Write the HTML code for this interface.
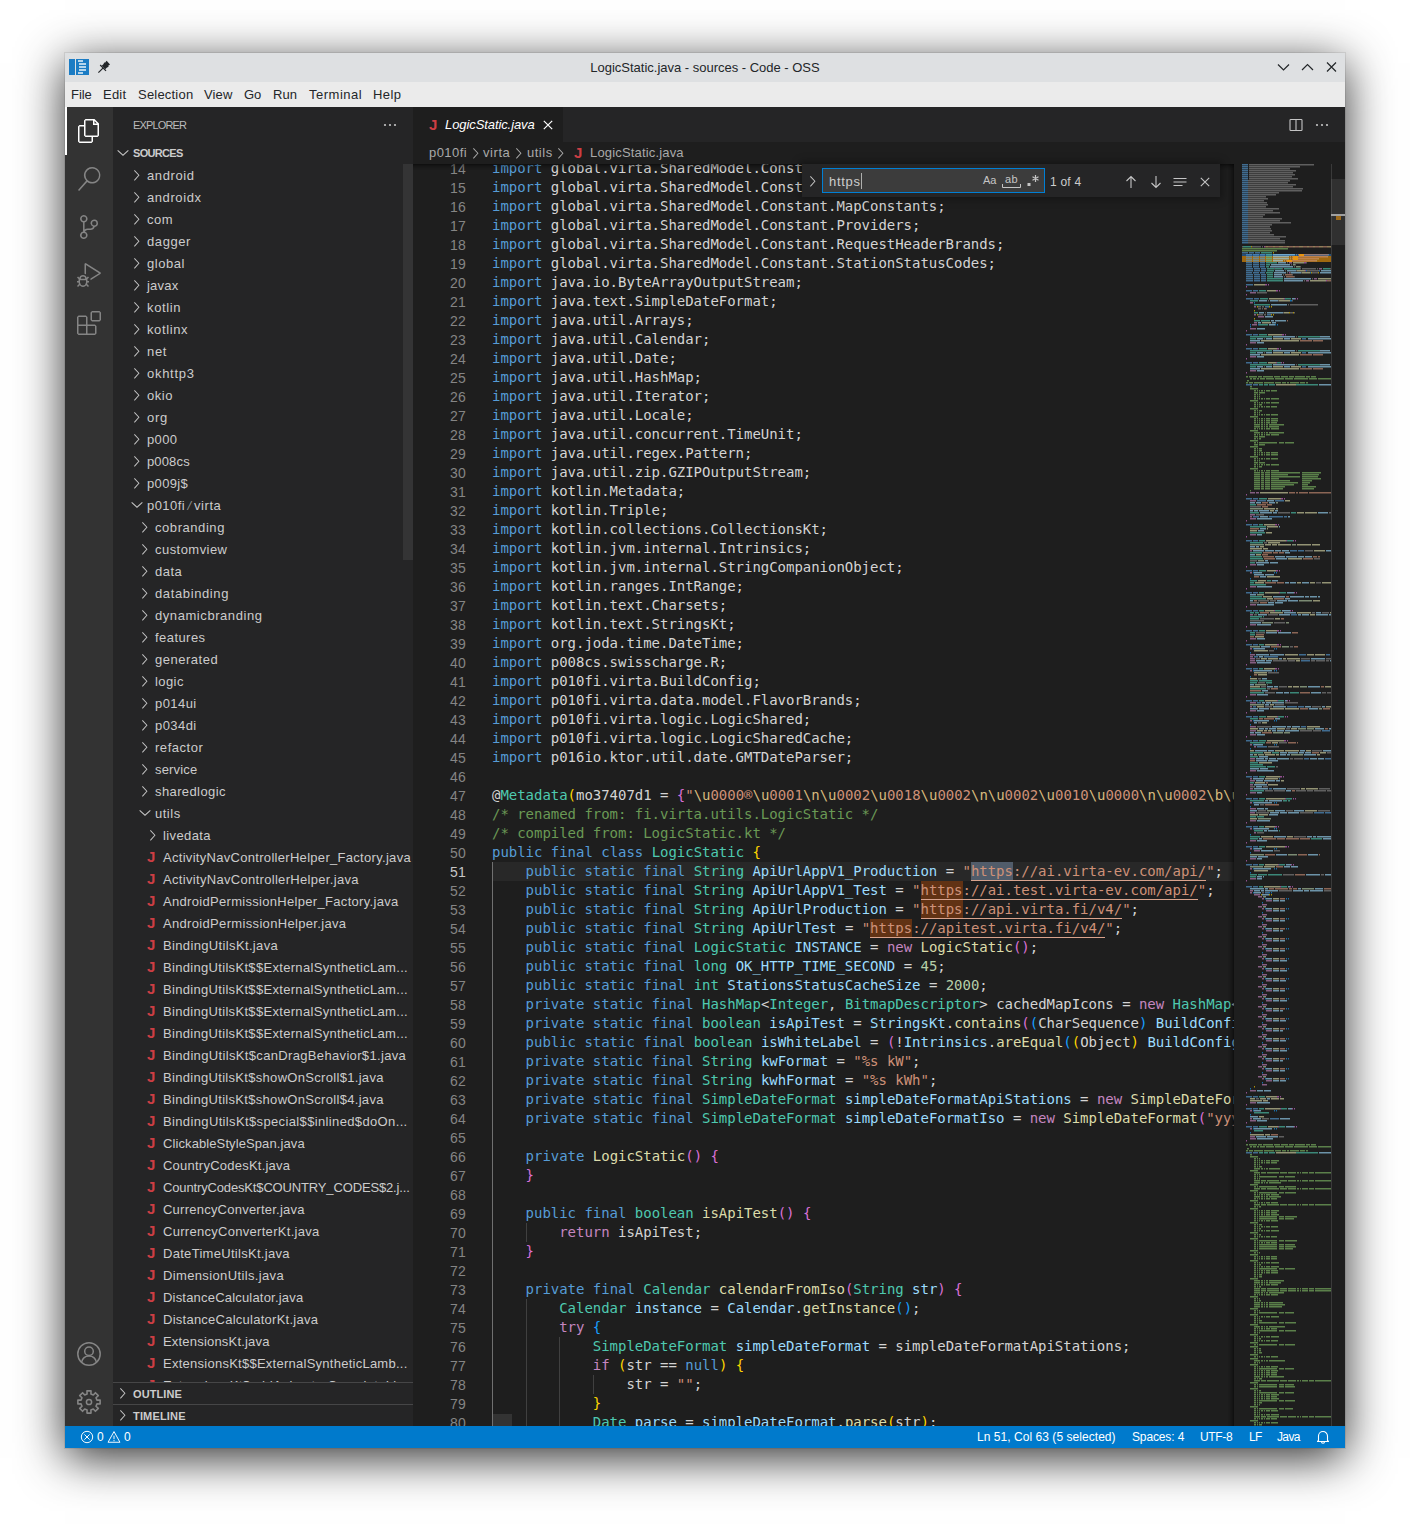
<!DOCTYPE html>
<html lang="en"><head><meta charset="utf-8"><title>LogicStatic.java - sources - Code - OSS</title>
<style>
*{box-sizing:border-box;margin:0;padding:0}
html,body{width:1410px;height:1525px;overflow:hidden;background:#fff}
body{position:relative;font-family:"Liberation Sans",sans-serif;font-size:13px;color:#ccc}
.u{white-space:pre}
.abs{position:absolute}
#win{position:absolute;left:65px;top:53px;width:1280px;height:1395px;background:#1e1e1e;
 box-shadow:0 10px 44px rgba(0,0,0,.82), 0 0 0 1px rgba(0,0,0,.08);}
#title{position:absolute;left:0;top:0;width:1280px;height:29px;background:#dee0e2;color:#232629;text-align:center;line-height:30px;font-size:13px}
#menu{position:absolute;left:0;top:29px;width:1280px;height:25px;background:#ebebeb;color:#232629;line-height:26px;font-size:13px}
#menu .u{position:absolute;top:0}
#act{position:absolute;left:0;top:54px;width:48px;height:1319px;background:#333}
#act svg{position:absolute;left:12px;width:24px;height:24px}
#side{position:absolute;left:48px;top:54px;width:300px;height:1319px;background:#252526;overflow:hidden}
#ed{position:absolute;left:348px;top:54px;width:932px;height:1319px;background:#1e1e1e;overflow:hidden}
#status{position:absolute;left:0;top:1373px;width:1280px;height:22px;background:#007acc;color:#fff;font-size:12px;line-height:22px}
#status .u{position:absolute;top:0}
.row{position:absolute;left:0;width:300px;height:22px;line-height:22px;color:#ccc;font-size:13px;white-space:pre}
.row .u{position:absolute;top:1px}
.row svg{position:absolute;top:3px;width:16px;height:16px}
.J{position:absolute;top:0;color:#cc3e44;font-weight:bold;font-size:15px;font-family:"Liberation Sans",sans-serif}
.hdr{position:absolute;left:0;width:300px;height:22px;line-height:22px;font-size:11px;font-weight:bold;color:#ccc}
.hdr .u{position:absolute;left:20px;top:0}
.hdr.b .u{top:1px}
.hdr svg{position:absolute;left:3px;top:3px;width:16px;height:16px}
#code{position:absolute;left:0;top:57px;width:821px;height:1262px;overflow:hidden}
.ln{position:absolute;left:0;width:53px;text-align:right;height:19px;line-height:19px;color:#858585;font-size:14px}
.cl{position:absolute;left:79px;height:19px;line-height:19px;white-space:pre;font-family:"DejaVu Sans Mono","Liberation Mono",monospace;font-size:14px;color:#d4d4d4;letter-spacing:-0.0287px}
.cl span{display:inline-block;height:19px;vertical-align:top}
.ig{position:absolute;width:1px;background:#404040}
.fm{background:rgba(234,92,0,.33)}
.lk{box-shadow:inset 0 -1px 0 #d9a38d}
</style></head><body>
<div id="win"><div id="title"><span class="u" style="letter-spacing:-0.009px;">LogicStatic.java - sources - Code - OSS</span>
<svg class="abs" style="left:4px;top:6px" width="20" height="17" viewBox="0 0 20 17"><rect x="0" y="0" width="6" height="16" fill="#1b7cc4"/><rect x="7" y="0" width="13" height="16" fill="#1b7cc4"/><path d="M9 2h5M10 5h7M10 8h7M10 11h7M9 14h5" stroke="#fff" stroke-width="1.3" opacity=".9"/></svg>
<svg class="abs" style="left:32px;top:7px" width="14" height="14" viewBox="0 0 14 14"><path d="M7.2 2.2 L11.8 6.8 L10 7.4 L8.2 9.2 L4.8 5.8 L6.6 4 Z" fill="#232629" transform="rotate(0)"/><path d="M9.6 0.8 L13 4.4 L10.6 6.2 L7.6 3.2 Z" fill="#232629"/><path d="M6.2 7.8 L1.4 12.6" stroke="#232629" stroke-width="1.2"/><path d="M3.2 5 L9 10.8" stroke="#232629" stroke-width="1.2"/></svg>
<svg class="abs" style="left:1209.5px;top:7px" width="66" height="16" viewBox="0 0 66 16" fill="none" stroke="#232629" stroke-width="1.2"><path d="M3 4.5 L8.5 10 L14 4.5"/><path d="M27 10 L32.5 4.5 L38 10"/><path d="M52 2.5 L61 11.5 M61 2.5 L52 11.5"/></svg>
</div><div id="menu"><span class="u" style="letter-spacing:-0.039px;left:6px">File</span><span class="u" style="letter-spacing:0.219px;left:38px">Edit</span><span class="u" style="letter-spacing:0.207px;left:73px">Selection</span><span class="u" style="letter-spacing:0.125px;left:139px">View</span><span class="u" style="left:179px">Go</span><span class="u" style="letter-spacing:0.099px;left:208px">Run</span><span class="u" style="letter-spacing:0.512px;left:244px">Terminal</span><span class="u" style="letter-spacing:0.395px;left:308px">Help</span></div><div id="act"><div class="abs" style="left:0;top:0;width:2px;height:48px;background:#fff"></div><svg style="top:12px" viewBox="0 0 24 24"><path fill="#fff" d="M17.5 0h-9L7 1.5V6H2.5L1 7.5v15.07L2.5 24h12.07L16 22.57V18h4.7l1.3-1.43V4.5L17.5 0zm0 2.12l2.380 2.380H17.500V2.120zm-3 20.380h-12v-15H7v9.070L8.500 18h6v4.500zm6-6h-12v-15H16V6h4.500v10.500z"/></svg><svg style="top:60px" viewBox="0 0 24 24"><path fill="#858585" d="M15.250 0a8.250 8.250 0 0 0-6.180 13.720L1 22.880l1.120 1.120 8.050-9.120A8.251 8.251 0 1 0 15.250.010V0zm0 15a6.750 6.750 0 1 1 0-13.500 6.750 6.750 0 0 1 0 13.500z"/></svg><svg style="top:108px" viewBox="0 0 24 24"><path fill="#858585" d="M21.007 8.222A3.738 3.738 0 0 0 15.045 5.200a3.737 3.737 0 0 0 1.156 6.583 2.988 2.988 0 0 1-2.668 1.670h-2.990a4.456 4.456 0 0 0-2.989 1.165V7.400a3.737 3.737 0 1 0-1.494 0v9.117a3.776 3.776 0 1 0 1.816.099 2.990 2.990 0 0 1 2.668-1.667h2.990a4.484 4.484 0 0 0 4.223-3.039 3.736 3.736 0 0 0 3.250-3.687zM4.565 3.738a2.242 2.242 0 1 1 4.484 0 2.242 2.242 0 0 1-4.484 0zm4.484 16.441a2.242 2.242 0 1 1-4.484 0 2.242 2.242 0 0 1 4.484 0zm8.221-9.715a2.242 2.242 0 1 1 0-4.485 2.242 2.242 0 0 1 0 4.485z"/></svg><svg style="top:156px" viewBox="0 0 24 24"><path fill="#858585" d="M10.940 13.500l-1.320 1.320a3.730 3.730 0 0 0-7.240 0L1.060 13.500 0 14.560l1.720 1.720-.220.220V18H0v1.500h1.500v.080c.077.489.214.966.410 1.420L0 22.940 1.060 24l1.650-1.650A4.308 4.308 0 0 0 6 24a4.310 4.310 0 0 0 3.290-1.650L10.940 24 12 22.940 10.090 21c.198-.464.336-.951.410-1.450v-.100H12V18h-1.500v-1.500l-.220-.220L12 14.560l-1.060-1.060zM6 13.500a2.250 2.250 0 0 1 2.250 2.250h-4.500A2.250 2.250 0 0 1 6 13.500zm3 6a3.330 3.330 0 0 1-3 3 3.330 3.330 0 0 1-3-3v-2.250h6v2.250zm14.760-9.900v1.260L13.500 17.370V15.600l8.500-5.370L9 2v9.460a5.070 5.070 0 0 0-1.500-.720V.630L8.640 0l15.120 9.600z"/></svg><svg style="top:204px" viewBox="0 0 24 24"><path fill="#858585" d="M13.500 1.500L15 0h7.500L24 1.500V9l-1.500 1.500H15L13.500 9V1.500zm1.500 0V9h7.500V1.500H15zM0 15V6l1.500-1.500H9L10.500 6v7.500H18l1.500 1.500v7.500L18 24H1.500L0 22.500V15zm9-1.500V6H1.500v7.500H9zM9 15H1.500v7.500H9V15zm1.500 7.500H18V15h-7.500v7.500z"/></svg><svg style="top:1235px" viewBox="0 0 24 24" fill="none" stroke="#858585" stroke-width="1.5"><circle cx="12" cy="12" r="11.2"/><circle cx="12" cy="9.3" r="4.3"/><path d="M4.6 20.2 c1-4.600 4-6.200 7.400-6.200 s6.400 1.600 7.400 6.200"/></svg><svg style="top:1283px" viewBox="0 0 24 24" fill="none" stroke="#858585" stroke-width="1.5"><path d="M9.97 0.88 L14.03 0.88 L13.91 4.03 L16.28 5.01 L18.42 2.70 L21.30 5.58 L18.99 7.72 L19.97 10.09 L23.12 9.97 L23.12 14.03 L19.97 13.91 L18.99 16.28 L21.30 18.42 L18.42 21.30 L16.28 18.99 L13.91 19.97 L14.03 23.12 L9.97 23.12 L10.09 19.97 L7.72 18.99 L5.58 21.30 L2.70 18.42 L5.01 16.28 L4.03 13.91 L0.88 14.03 L0.88 9.97 L4.03 10.09 L5.01 7.72 L2.70 5.58 L5.58 2.70 L7.72 5.01 L10.09 4.03 Z" stroke-linejoin="round" stroke-width="1.6"/><circle cx="12" cy="12" r="2.6"/></svg></div><div id="side"><div class="abs" style="left:20px;top:1px;height:35px;line-height:35px;font-size:11px;color:#bbb"><span class="u" style="letter-spacing:-0.846px;">EXPLORER</span></div><svg class="abs" style="left:269px;top:10px" width="16" height="16" viewBox="0 0 16 16" fill="#c5c5c5"><circle cx="3" cy="8" r="1.1"/><circle cx="8" cy="8" r="1.1"/><circle cx="13" cy="8" r="1.1"/></svg><div class="hdr" style="top:35px"><svg style="left:2px;" viewBox="0 0 16 16"><path d="M2.300 5.700 L3 5 L8 9.500 L13 5 L13.700 5.700 L8 11 Z" fill="#c5c5c5"/></svg><span class="u" style="letter-spacing:-0.690px;">SOURCES</span></div><div class="abs" id="tree" style="left:0;top:57px;width:300px;height:1218px;overflow:hidden"><div class="row" style="top:0px"><svg style="left:16px;" viewBox="0 0 16 16"><path d="M5.7 13.7 L5 13 L9.3 8.3 L5 3.700 L5.700 3 L10.500 8.300 Z" fill="#c5c5c5"/></svg><span class="u" style="letter-spacing:0.612px;left:34px">android</span></div><div class="row" style="top:22px"><svg style="left:16px;" viewBox="0 0 16 16"><path d="M5.7 13.7 L5 13 L9.3 8.3 L5 3.700 L5.700 3 L10.500 8.300 Z" fill="#c5c5c5"/></svg><span class="u" style="letter-spacing:0.582px;left:34px">androidx</span></div><div class="row" style="top:44px"><svg style="left:16px;" viewBox="0 0 16 16"><path d="M5.7 13.7 L5 13 L9.3 8.3 L5 3.700 L5.700 3 L10.500 8.300 Z" fill="#c5c5c5"/></svg><span class="u" style="letter-spacing:0.568px;left:34px">com</span></div><div class="row" style="top:66px"><svg style="left:16px;" viewBox="0 0 16 16"><path d="M5.7 13.7 L5 13 L9.3 8.3 L5 3.700 L5.700 3 L10.500 8.300 Z" fill="#c5c5c5"/></svg><span class="u" style="letter-spacing:0.583px;left:34px">dagger</span></div><div class="row" style="top:88px"><svg style="left:16px;" viewBox="0 0 16 16"><path d="M5.7 13.7 L5 13 L9.3 8.3 L5 3.700 L5.700 3 L10.500 8.300 Z" fill="#c5c5c5"/></svg><span class="u" style="letter-spacing:0.526px;left:34px">global</span></div><div class="row" style="top:110px"><svg style="left:16px;" viewBox="0 0 16 16"><path d="M5.7 13.7 L5 13 L9.3 8.3 L5 3.700 L5.700 3 L10.500 8.300 Z" fill="#c5c5c5"/></svg><span class="u" style="letter-spacing:0.212px;left:34px">javax</span></div><div class="row" style="top:132px"><svg style="left:16px;" viewBox="0 0 16 16"><path d="M5.7 13.7 L5 13 L9.3 8.3 L5 3.700 L5.700 3 L10.500 8.300 Z" fill="#c5c5c5"/></svg><span class="u" style="letter-spacing:0.648px;left:34px">kotlin</span></div><div class="row" style="top:154px"><svg style="left:16px;" viewBox="0 0 16 16"><path d="M5.7 13.7 L5 13 L9.3 8.3 L5 3.700 L5.700 3 L10.500 8.300 Z" fill="#c5c5c5"/></svg><span class="u" style="letter-spacing:0.609px;left:34px">kotlinx</span></div><div class="row" style="top:176px"><svg style="left:16px;" viewBox="0 0 16 16"><path d="M5.7 13.7 L5 13 L9.3 8.3 L5 3.700 L5.700 3 L10.500 8.300 Z" fill="#c5c5c5"/></svg><span class="u" style="letter-spacing:0.661px;left:34px">net</span></div><div class="row" style="top:198px"><svg style="left:16px;" viewBox="0 0 16 16"><path d="M5.7 13.7 L5 13 L9.3 8.3 L5 3.700 L5.700 3 L10.500 8.300 Z" fill="#c5c5c5"/></svg><span class="u" style="letter-spacing:0.717px;left:34px">okhttp3</span></div><div class="row" style="top:220px"><svg style="left:16px;" viewBox="0 0 16 16"><path d="M5.7 13.7 L5 13 L9.3 8.3 L5 3.700 L5.700 3 L10.500 8.300 Z" fill="#c5c5c5"/></svg><span class="u" style="letter-spacing:0.543px;left:34px">okio</span></div><div class="row" style="top:242px"><svg style="left:16px;" viewBox="0 0 16 16"><path d="M5.7 13.7 L5 13 L9.3 8.3 L5 3.700 L5.700 3 L10.500 8.300 Z" fill="#c5c5c5"/></svg><span class="u" style="letter-spacing:0.771px;left:34px">org</span></div><div class="row" style="top:264px"><svg style="left:16px;" viewBox="0 0 16 16"><path d="M5.7 13.7 L5 13 L9.3 8.3 L5 3.700 L5.700 3 L10.500 8.300 Z" fill="#c5c5c5"/></svg><span class="u" style="letter-spacing:0.348px;left:34px">p000</span></div><div class="row" style="top:286px"><svg style="left:16px;" viewBox="0 0 16 16"><path d="M5.7 13.7 L5 13 L9.3 8.3 L5 3.700 L5.700 3 L10.500 8.300 Z" fill="#c5c5c5"/></svg><span class="u" style="letter-spacing:0.143px;left:34px">p008cs</span></div><div class="row" style="top:308px"><svg style="left:16px;" viewBox="0 0 16 16"><path d="M5.7 13.7 L5 13 L9.3 8.3 L5 3.700 L5.700 3 L10.500 8.300 Z" fill="#c5c5c5"/></svg><span class="u" style="letter-spacing:0.341px;left:34px">p009j$</span></div><div class="row" style="top:330px"><svg style="left:15.5px;" viewBox="0 0 16 16"><path d="M2.300 5.700 L3 5 L8 9.500 L13 5 L13.700 5.700 L8 11 Z" fill="#c5c5c5"/></svg><span class="u" style="letter-spacing:0.453px;left:34px">p010fi</span><span class="u" style="letter-spacing:1.016px;left:74.5px;color:#8b8b8b;font-style:italic">/</span><span class="u" style="letter-spacing:0.553px;left:81px">virta</span></div><div class="row" style="top:352px"><svg style="left:24px;" viewBox="0 0 16 16"><path d="M5.7 13.7 L5 13 L9.3 8.3 L5 3.700 L5.700 3 L10.500 8.300 Z" fill="#c5c5c5"/></svg><span class="u" style="letter-spacing:0.559px;left:42px">cobranding</span></div><div class="row" style="top:374px"><svg style="left:24px;" viewBox="0 0 16 16"><path d="M5.7 13.7 L5 13 L9.3 8.3 L5 3.700 L5.700 3 L10.500 8.300 Z" fill="#c5c5c5"/></svg><span class="u" style="letter-spacing:0.455px;left:42px">customview</span></div><div class="row" style="top:396px"><svg style="left:24px;" viewBox="0 0 16 16"><path d="M5.7 13.7 L5 13 L9.3 8.3 L5 3.700 L5.700 3 L10.500 8.300 Z" fill="#c5c5c5"/></svg><span class="u" style="letter-spacing:0.492px;left:42px">data</span></div><div class="row" style="top:418px"><svg style="left:24px;" viewBox="0 0 16 16"><path d="M5.7 13.7 L5 13 L9.3 8.3 L5 3.700 L5.700 3 L10.500 8.300 Z" fill="#c5c5c5"/></svg><span class="u" style="letter-spacing:0.619px;left:42px">databinding</span></div><div class="row" style="top:440px"><svg style="left:24px;" viewBox="0 0 16 16"><path d="M5.7 13.7 L5 13 L9.3 8.3 L5 3.700 L5.700 3 L10.500 8.300 Z" fill="#c5c5c5"/></svg><span class="u" style="letter-spacing:0.567px;left:42px">dynamicbranding</span></div><div class="row" style="top:462px"><svg style="left:24px;" viewBox="0 0 16 16"><path d="M5.7 13.7 L5 13 L9.3 8.3 L5 3.700 L5.700 3 L10.500 8.300 Z" fill="#c5c5c5"/></svg><span class="u" style="letter-spacing:0.439px;left:42px">features</span></div><div class="row" style="top:484px"><svg style="left:24px;" viewBox="0 0 16 16"><path d="M5.7 13.7 L5 13 L9.3 8.3 L5 3.700 L5.700 3 L10.500 8.300 Z" fill="#c5c5c5"/></svg><span class="u" style="letter-spacing:0.507px;left:42px">generated</span></div><div class="row" style="top:506px"><svg style="left:24px;" viewBox="0 0 16 16"><path d="M5.7 13.7 L5 13 L9.3 8.3 L5 3.700 L5.700 3 L10.500 8.300 Z" fill="#c5c5c5"/></svg><span class="u" style="letter-spacing:0.412px;left:42px">logic</span></div><div class="row" style="top:528px"><svg style="left:24px;" viewBox="0 0 16 16"><path d="M5.7 13.7 L5 13 L9.3 8.3 L5 3.700 L5.700 3 L10.500 8.300 Z" fill="#c5c5c5"/></svg><span class="u" style="letter-spacing:0.443px;left:42px">p014ui</span></div><div class="row" style="top:550px"><svg style="left:24px;" viewBox="0 0 16 16"><path d="M5.7 13.7 L5 13 L9.3 8.3 L5 3.700 L5.700 3 L10.500 8.300 Z" fill="#c5c5c5"/></svg><span class="u" style="letter-spacing:0.435px;left:42px">p034di</span></div><div class="row" style="top:572px"><svg style="left:24px;" viewBox="0 0 16 16"><path d="M5.7 13.7 L5 13 L9.3 8.3 L5 3.700 L5.700 3 L10.500 8.300 Z" fill="#c5c5c5"/></svg><span class="u" style="letter-spacing:0.537px;left:42px">refactor</span></div><div class="row" style="top:594px"><svg style="left:24px;" viewBox="0 0 16 16"><path d="M5.7 13.7 L5 13 L9.3 8.3 L5 3.700 L5.700 3 L10.500 8.300 Z" fill="#c5c5c5"/></svg><span class="u" style="letter-spacing:0.183px;left:42px">service</span></div><div class="row" style="top:616px"><svg style="left:24px;" viewBox="0 0 16 16"><path d="M5.7 13.7 L5 13 L9.3 8.3 L5 3.700 L5.700 3 L10.500 8.300 Z" fill="#c5c5c5"/></svg><span class="u" style="letter-spacing:0.392px;left:42px">sharedlogic</span></div><div class="row" style="top:638px"><svg style="left:23.5px;" viewBox="0 0 16 16"><path d="M2.300 5.700 L3 5 L8 9.500 L13 5 L13.700 5.700 L8 11 Z" fill="#c5c5c5"/></svg><span class="u" style="letter-spacing:0.509px;left:42px">utils</span></div><div class="row" style="top:660px"><svg style="left:32px;" viewBox="0 0 16 16"><path d="M5.7 13.7 L5 13 L9.3 8.3 L5 3.700 L5.700 3 L10.500 8.300 Z" fill="#c5c5c5"/></svg><span class="u" style="letter-spacing:0.389px;left:50px">livedata</span></div><div class="row" style="top:682px"><span class="J" style="left:34px">J</span><span class="u" style="letter-spacing:0.299px;left:50px">ActivityNavControllerHelper_Factory.java</span></div><div class="row" style="top:704px"><span class="J" style="left:34px">J</span><span class="u" style="letter-spacing:0.316px;left:50px">ActivityNavControllerHelper.java</span></div><div class="row" style="top:726px"><span class="J" style="left:34px">J</span><span class="u" style="letter-spacing:0.309px;left:50px">AndroidPermissionHelper_Factory.java</span></div><div class="row" style="top:748px"><span class="J" style="left:34px">J</span><span class="u" style="letter-spacing:0.330px;left:50px">AndroidPermissionHelper.java</span></div><div class="row" style="top:770px"><span class="J" style="left:34px">J</span><span class="u" style="letter-spacing:0.354px;left:50px">BindingUtilsKt.java</span></div><div class="row" style="top:792px"><span class="J" style="left:34px">J</span><span class="u" style="letter-spacing:0.316px;left:50px">BindingUtilsKt$$ExternalSyntheticLam...</span></div><div class="row" style="top:814px"><span class="J" style="left:34px">J</span><span class="u" style="letter-spacing:0.316px;left:50px">BindingUtilsKt$$ExternalSyntheticLam...</span></div><div class="row" style="top:836px"><span class="J" style="left:34px">J</span><span class="u" style="letter-spacing:0.316px;left:50px">BindingUtilsKt$$ExternalSyntheticLam...</span></div><div class="row" style="top:858px"><span class="J" style="left:34px">J</span><span class="u" style="letter-spacing:0.316px;left:50px">BindingUtilsKt$$ExternalSyntheticLam...</span></div><div class="row" style="top:880px"><span class="J" style="left:34px">J</span><span class="u" style="letter-spacing:0.342px;left:50px">BindingUtilsKt$canDragBehavior$1.java</span></div><div class="row" style="top:902px"><span class="J" style="left:34px">J</span><span class="u" style="letter-spacing:0.308px;left:50px">BindingUtilsKt$showOnScroll$1.java</span></div><div class="row" style="top:924px"><span class="J" style="left:34px">J</span><span class="u" style="letter-spacing:0.308px;left:50px">BindingUtilsKt$showOnScroll$4.java</span></div><div class="row" style="top:946px"><span class="J" style="left:34px">J</span><span class="u" style="letter-spacing:0.360px;left:50px">BindingUtilsKt$special$$inlined$doOn...</span></div><div class="row" style="top:968px"><span class="J" style="left:34px">J</span><span class="u" style="letter-spacing:0.098px;left:50px">ClickableStyleSpan.java</span></div><div class="row" style="top:990px"><span class="J" style="left:34px">J</span><span class="u" style="letter-spacing:0.232px;left:50px">CountryCodesKt.java</span></div><div class="row" style="top:1012px"><span class="J" style="left:34px">J</span><span class="u" style="letter-spacing:-0.149px;left:50px">CountryCodesKt$COUNTRY_CODES$2.j...</span></div><div class="row" style="top:1034px"><span class="J" style="left:34px">J</span><span class="u" style="letter-spacing:0.235px;left:50px">CurrencyConverter.java</span></div><div class="row" style="top:1056px"><span class="J" style="left:34px">J</span><span class="u" style="letter-spacing:0.291px;left:50px">CurrencyConverterKt.java</span></div><div class="row" style="top:1078px"><span class="J" style="left:34px">J</span><span class="u" style="letter-spacing:0.295px;left:50px">DateTimeUtilsKt.java</span></div><div class="row" style="top:1100px"><span class="J" style="left:34px">J</span><span class="u" style="letter-spacing:0.361px;left:50px">DimensionUtils.java</span></div><div class="row" style="top:1122px"><span class="J" style="left:34px">J</span><span class="u" style="letter-spacing:0.194px;left:50px">DistanceCalculator.java</span></div><div class="row" style="top:1144px"><span class="J" style="left:34px">J</span><span class="u" style="letter-spacing:0.252px;left:50px">DistanceCalculatorKt.java</span></div><div class="row" style="top:1166px"><span class="J" style="left:34px">J</span><span class="u" style="letter-spacing:0.194px;left:50px">ExtensionsKt.java</span></div><div class="row" style="top:1188px"><span class="J" style="left:34px">J</span><span class="u" style="letter-spacing:0.255px;left:50px">ExtensionsKt$$ExternalSyntheticLamb...</span></div><div class="row" style="top:1210px"><span class="J" style="left:34px">J</span><span class="u" style="letter-spacing:0.323px;left:50px">ExtensionsKt$addAnimatorCompleteLis...</span></div></div><div class="abs" style="left:290px;top:57px;width:10px;height:396px;background:rgba(121,121,121,.18)"></div><div class="hdr b" style="top:1275px;border-top:1px solid rgba(204,204,204,.2);line-height:21px"><svg style="left:2px;top:2px" viewBox="0 0 16 16"><path d="M5.7 13.7 L5 13 L9.3 8.3 L5 3.700 L5.700 3 L10.500 8.300 Z" fill="#c5c5c5"/></svg><span class="u" style="letter-spacing:0.089px;">OUTLINE</span></div><div class="hdr b" style="top:1297px;border-top:1px solid rgba(204,204,204,.2);line-height:21px"><svg style="left:2px;top:2px" viewBox="0 0 16 16"><path d="M5.7 13.7 L5 13 L9.3 8.3 L5 3.700 L5.700 3 L10.500 8.300 Z" fill="#c5c5c5"/></svg><span class="u" style="letter-spacing:0.170px;">TIMELINE</span></div></div><div id="ed"><div class="abs" style="left:0;top:0;width:932px;height:35px;background:#252526"></div><div class="abs" style="left:0;top:0;width:150px;height:35px;background:#1e1e1e;line-height:35px;color:#fff;font-size:13px"><span class="J" style="left:16px">J</span><span class="u" style="letter-spacing:-0.088px;position:absolute;left:32px;top:0;font-style:italic">LogicStatic.java</span><svg class="abs" style="left:127px;top:10px" width="16" height="16" viewBox="0 0 16 16"><path d="M3.8 3.8 L12.200 12.200 M12.200 3.800 L3.800 12.200" stroke="#fff" stroke-width="1.2"/></svg></div><svg class="abs" style="left:875px;top:10px" width="16" height="16" viewBox="0 0 16 16" fill="none" stroke="#c5c5c5" stroke-width="1.1"><rect x="2" y="2.500" width="12" height="11" rx=".8"/><path d="M8 2.500 V13.500"/></svg><svg class="abs" style="left:901px;top:10px" width="16" height="16" viewBox="0 0 16 16" fill="#c5c5c5"><circle cx="3" cy="8" r="1.1"/><circle cx="8" cy="8" r="1.1"/><circle cx="13" cy="8" r="1.1"/></svg><div class="abs" style="left:0;top:35px;width:932px;height:22px;line-height:22px;color:#a9a9a9;font-size:13px"><span class="u" style="letter-spacing:0.453px;position:absolute;left:16px;top:0">p010fi</span><span class="u" style="letter-spacing:0.553px;position:absolute;left:70px;top:0">virta</span><span class="u" style="letter-spacing:0.509px;position:absolute;left:114px;top:0">utils</span><svg class="abs" style="left:55px;top:3px" width="16" height="16" viewBox="0 0 16 16"><path d="M5.7 13.7 L5 13 L9.3 8.3 L5 3.700 L5.700 3 L10.500 8.300 Z" fill="#a9a9a9"/></svg><svg class="abs" style="left:98px;top:3px" width="16" height="16" viewBox="0 0 16 16"><path d="M5.7 13.7 L5 13 L9.3 8.3 L5 3.700 L5.700 3 L10.500 8.300 Z" fill="#a9a9a9"/></svg><svg class="abs" style="left:140px;top:3px" width="16" height="16" viewBox="0 0 16 16"><path d="M5.7 13.7 L5 13 L9.3 8.3 L5 3.700 L5.700 3 L10.500 8.300 Z" fill="#a9a9a9"/></svg><span class="J" style="left:161px">J</span><span class="u" style="letter-spacing:0.166px;position:absolute;left:177px;top:0">LogicStatic.java</span></div><div id="code"><div class="abs" style="left:79px;top:698px;width:742px;height:19px;background:#282828"></div><div class="ig" style="left:79px;top:698px;height:589px;background:#707070"></div><div class="ig" style="left:113px;top:1059px;height:19px;background:#404040"></div><div class="ig" style="left:113px;top:1135px;height:152px;background:#404040"></div><div class="ig" style="left:146px;top:1173px;height:114px;background:#404040"></div><div class="ig" style="left:180px;top:1211px;height:19px;background:#404040"></div><div class="ln" style="top:-4px"><span class="u" style="letter-spacing:0.227px;">14</span></div><div class="cl" style="top:-5px"><span style="color:#569cd6">import</span><span style="color:#d4d4d4"> global.virta.SharedModel.Constant.Brands;</span></div><div class="ln" style="top:15px"><span class="u" style="letter-spacing:0.227px;">15</span></div><div class="cl" style="top:14px"><span style="color:#569cd6">import</span><span style="color:#d4d4d4"> global.virta.SharedModel.Constant.Keys;</span></div><div class="ln" style="top:34px"><span class="u" style="letter-spacing:0.227px;">16</span></div><div class="cl" style="top:33px"><span style="color:#569cd6">import</span><span style="color:#d4d4d4"> global.virta.SharedModel.Constant.MapConstants;</span></div><div class="ln" style="top:53px"><span class="u" style="letter-spacing:0.227px;">17</span></div><div class="cl" style="top:52px"><span style="color:#569cd6">import</span><span style="color:#d4d4d4"> global.virta.SharedModel.Constant.Providers;</span></div><div class="ln" style="top:72px"><span class="u" style="letter-spacing:0.227px;">18</span></div><div class="cl" style="top:71px"><span style="color:#569cd6">import</span><span style="color:#d4d4d4"> global.virta.SharedModel.Constant.RequestHeaderBrands;</span></div><div class="ln" style="top:91px"><span class="u" style="letter-spacing:0.227px;">19</span></div><div class="cl" style="top:90px"><span style="color:#569cd6">import</span><span style="color:#d4d4d4"> global.virta.SharedModel.Constant.StationStatusCodes;</span></div><div class="ln" style="top:110px"><span class="u" style="letter-spacing:0.227px;">20</span></div><div class="cl" style="top:109px"><span style="color:#569cd6">import</span><span style="color:#d4d4d4"> java.io.ByteArrayOutputStream;</span></div><div class="ln" style="top:129px"><span class="u" style="letter-spacing:0.227px;">21</span></div><div class="cl" style="top:128px"><span style="color:#569cd6">import</span><span style="color:#d4d4d4"> java.text.SimpleDateFormat;</span></div><div class="ln" style="top:148px"><span class="u" style="letter-spacing:0.227px;">22</span></div><div class="cl" style="top:147px"><span style="color:#569cd6">import</span><span style="color:#d4d4d4"> java.util.Arrays;</span></div><div class="ln" style="top:167px"><span class="u" style="letter-spacing:0.227px;">23</span></div><div class="cl" style="top:166px"><span style="color:#569cd6">import</span><span style="color:#d4d4d4"> java.util.Calendar;</span></div><div class="ln" style="top:186px"><span class="u" style="letter-spacing:0.227px;">24</span></div><div class="cl" style="top:185px"><span style="color:#569cd6">import</span><span style="color:#d4d4d4"> java.util.Date;</span></div><div class="ln" style="top:205px"><span class="u" style="letter-spacing:0.227px;">25</span></div><div class="cl" style="top:204px"><span style="color:#569cd6">import</span><span style="color:#d4d4d4"> java.util.HashMap;</span></div><div class="ln" style="top:224px"><span class="u" style="letter-spacing:0.227px;">26</span></div><div class="cl" style="top:223px"><span style="color:#569cd6">import</span><span style="color:#d4d4d4"> java.util.Iterator;</span></div><div class="ln" style="top:243px"><span class="u" style="letter-spacing:0.227px;">27</span></div><div class="cl" style="top:242px"><span style="color:#569cd6">import</span><span style="color:#d4d4d4"> java.util.Locale;</span></div><div class="ln" style="top:262px"><span class="u" style="letter-spacing:0.227px;">28</span></div><div class="cl" style="top:261px"><span style="color:#569cd6">import</span><span style="color:#d4d4d4"> java.util.concurrent.TimeUnit;</span></div><div class="ln" style="top:281px"><span class="u" style="letter-spacing:0.227px;">29</span></div><div class="cl" style="top:280px"><span style="color:#569cd6">import</span><span style="color:#d4d4d4"> java.util.regex.Pattern;</span></div><div class="ln" style="top:300px"><span class="u" style="letter-spacing:0.227px;">30</span></div><div class="cl" style="top:299px"><span style="color:#569cd6">import</span><span style="color:#d4d4d4"> java.util.zip.GZIPOutputStream;</span></div><div class="ln" style="top:319px"><span class="u" style="letter-spacing:0.227px;">31</span></div><div class="cl" style="top:318px"><span style="color:#569cd6">import</span><span style="color:#d4d4d4"> kotlin.Metadata;</span></div><div class="ln" style="top:338px"><span class="u" style="letter-spacing:0.227px;">32</span></div><div class="cl" style="top:337px"><span style="color:#569cd6">import</span><span style="color:#d4d4d4"> kotlin.Triple;</span></div><div class="ln" style="top:357px"><span class="u" style="letter-spacing:0.227px;">33</span></div><div class="cl" style="top:356px"><span style="color:#569cd6">import</span><span style="color:#d4d4d4"> kotlin.collections.CollectionsKt;</span></div><div class="ln" style="top:376px"><span class="u" style="letter-spacing:0.227px;">34</span></div><div class="cl" style="top:375px"><span style="color:#569cd6">import</span><span style="color:#d4d4d4"> kotlin.jvm.internal.Intrinsics;</span></div><div class="ln" style="top:395px"><span class="u" style="letter-spacing:0.227px;">35</span></div><div class="cl" style="top:394px"><span style="color:#569cd6">import</span><span style="color:#d4d4d4"> kotlin.jvm.internal.StringCompanionObject;</span></div><div class="ln" style="top:414px"><span class="u" style="letter-spacing:0.227px;">36</span></div><div class="cl" style="top:413px"><span style="color:#569cd6">import</span><span style="color:#d4d4d4"> kotlin.ranges.IntRange;</span></div><div class="ln" style="top:433px"><span class="u" style="letter-spacing:0.227px;">37</span></div><div class="cl" style="top:432px"><span style="color:#569cd6">import</span><span style="color:#d4d4d4"> kotlin.text.Charsets;</span></div><div class="ln" style="top:452px"><span class="u" style="letter-spacing:0.227px;">38</span></div><div class="cl" style="top:451px"><span style="color:#569cd6">import</span><span style="color:#d4d4d4"> kotlin.text.StringsKt;</span></div><div class="ln" style="top:471px"><span class="u" style="letter-spacing:0.227px;">39</span></div><div class="cl" style="top:470px"><span style="color:#569cd6">import</span><span style="color:#d4d4d4"> org.joda.time.DateTime;</span></div><div class="ln" style="top:490px"><span class="u" style="letter-spacing:0.227px;">40</span></div><div class="cl" style="top:489px"><span style="color:#569cd6">import</span><span style="color:#d4d4d4"> p008cs.swisscharge.R;</span></div><div class="ln" style="top:509px"><span class="u" style="letter-spacing:0.227px;">41</span></div><div class="cl" style="top:508px"><span style="color:#569cd6">import</span><span style="color:#d4d4d4"> p010fi.virta.BuildConfig;</span></div><div class="ln" style="top:528px"><span class="u" style="letter-spacing:0.227px;">42</span></div><div class="cl" style="top:527px"><span style="color:#569cd6">import</span><span style="color:#d4d4d4"> p010fi.virta.data.model.FlavorBrands;</span></div><div class="ln" style="top:547px"><span class="u" style="letter-spacing:0.227px;">43</span></div><div class="cl" style="top:546px"><span style="color:#569cd6">import</span><span style="color:#d4d4d4"> p010fi.virta.logic.LogicShared;</span></div><div class="ln" style="top:566px"><span class="u" style="letter-spacing:0.227px;">44</span></div><div class="cl" style="top:565px"><span style="color:#569cd6">import</span><span style="color:#d4d4d4"> p010fi.virta.logic.LogicSharedCache;</span></div><div class="ln" style="top:585px"><span class="u" style="letter-spacing:0.227px;">45</span></div><div class="cl" style="top:584px"><span style="color:#569cd6">import</span><span style="color:#d4d4d4"> p016io.ktor.util.date.GMTDateParser;</span></div><div class="ln" style="top:604px"><span class="u" style="letter-spacing:0.227px;">46</span></div><div class="cl" style="top:603px"></div><div class="ln" style="top:623px"><span class="u" style="letter-spacing:0.227px;">47</span></div><div class="cl" style="top:622px"><span style="color:#d4d4d4">@</span><span style="color:#4ec9b0">Metadata</span><span style="color:#ffd700">(</span><span style="color:#d4d4d4">mo37407d1</span> <span style="color:#d4d4d4">=</span> <span style="color:#da70d6">{</span><span style="color:#ce9178">&quot;</span><span style="color:#d7ba7d">\u</span><span style="color:#ce9178">0000®</span><span style="color:#d7ba7d">\u</span><span style="color:#ce9178">0001</span><span style="color:#d7ba7d">\n</span><span style="color:#d7ba7d">\u</span><span style="color:#ce9178">0002</span><span style="color:#d7ba7d">\u</span><span style="color:#ce9178">0018</span><span style="color:#d7ba7d">\u</span><span style="color:#ce9178">0002</span><span style="color:#d7ba7d">\n</span><span style="color:#d7ba7d">\u</span><span style="color:#ce9178">0002</span><span style="color:#d7ba7d">\u</span><span style="color:#ce9178">0010</span><span style="color:#d7ba7d">\u</span><span style="color:#ce9178">0000</span><span style="color:#d7ba7d">\n</span><span style="color:#d7ba7d">\u</span><span style="color:#ce9178">0002</span><span style="color:#d7ba7d">\b</span><span style="color:#d7ba7d">\u</span><span style="color:#ce9178">0003</span><span style="color:#d7ba7d">\n</span><span style="color:#d7ba7d">\u</span><span style="color:#ce9178">0002</span><span style="color:#d7ba7d">\u</span><span style="color:#ce9178">0010</span><span style="color:#d7ba7d">\u</span><span style="color:#ce9178">000e</span><span style="color:#d7ba7d">\n</span><span style="color:#ce9178">&quot;</span><span style="color:#da70d6">}</span><span style="color:#d4d4d4">,</span> <span style="color:#d4d4d4">mo37408d2</span> <span style="color:#d4d4d4">=</span> <span style="color:#da70d6">{</span><span style="color:#da70d6">}</span><span style="color:#ffd700">)</span></div><div class="ln" style="top:642px"><span class="u" style="letter-spacing:0.227px;">48</span></div><div class="cl" style="top:641px"><span style="color:#6a9955">/* renamed from: fi.virta.utils.LogicStatic */</span></div><div class="ln" style="top:661px"><span class="u" style="letter-spacing:0.227px;">49</span></div><div class="cl" style="top:660px"><span style="color:#6a9955">/* compiled from: LogicStatic.kt */</span></div><div class="ln" style="top:680px"><span class="u" style="letter-spacing:0.227px;">50</span></div><div class="cl" style="top:679px"><span style="color:#569cd6">public</span> <span style="color:#569cd6">final</span> <span style="color:#569cd6">class</span> <span style="color:#4ec9b0">LogicStatic</span> <span style="color:#ffd700">{</span></div><div class="ln" style="top:699px;color:#c6c6c6"><span class="u" style="letter-spacing:0.227px;">51</span></div><div class="cl" style="top:698px">    <span style="color:#569cd6">public</span> <span style="color:#569cd6">static</span> <span style="color:#569cd6">final</span> <span style="color:#4ec9b0">String</span> <span style="color:#9cdcfe">ApiUrlAppV1_Production</span> <span style="color:#d4d4d4">=</span> <span style="color:#ce9178">&quot;<span class="lk"><span class="lk" style="background:#515c6a">https</span>://ai.virta-ev.com/api/</span>&quot;</span><span style="color:#d4d4d4">;</span></div><div class="ln" style="top:718px"><span class="u" style="letter-spacing:0.227px;">52</span></div><div class="cl" style="top:717px">    <span style="color:#569cd6">public</span> <span style="color:#569cd6">static</span> <span style="color:#569cd6">final</span> <span style="color:#4ec9b0">String</span> <span style="color:#9cdcfe">ApiUrlAppV1_Test</span> <span style="color:#d4d4d4">=</span> <span style="color:#ce9178">&quot;<span class="lk"><span class="lk" style="background:rgba(234,92,0,.33)">https</span>://ai.test.virta-ev.com/api/</span>&quot;</span><span style="color:#d4d4d4">;</span></div><div class="ln" style="top:737px"><span class="u" style="letter-spacing:0.227px;">53</span></div><div class="cl" style="top:736px">    <span style="color:#569cd6">public</span> <span style="color:#569cd6">static</span> <span style="color:#569cd6">final</span> <span style="color:#4ec9b0">String</span> <span style="color:#9cdcfe">ApiUrlProduction</span> <span style="color:#d4d4d4">=</span> <span style="color:#ce9178">&quot;<span class="lk"><span class="lk" style="background:rgba(234,92,0,.33)">https</span>://api.virta.fi/v4/</span>&quot;</span><span style="color:#d4d4d4">;</span></div><div class="ln" style="top:756px"><span class="u" style="letter-spacing:0.227px;">54</span></div><div class="cl" style="top:755px">    <span style="color:#569cd6">public</span> <span style="color:#569cd6">static</span> <span style="color:#569cd6">final</span> <span style="color:#4ec9b0">String</span> <span style="color:#9cdcfe">ApiUrlTest</span> <span style="color:#d4d4d4">=</span> <span style="color:#ce9178">&quot;<span class="lk"><span class="lk" style="background:rgba(234,92,0,.33)">https</span>://apitest.virta.fi/v4/</span>&quot;</span><span style="color:#d4d4d4">;</span></div><div class="ln" style="top:775px"><span class="u" style="letter-spacing:0.227px;">55</span></div><div class="cl" style="top:774px">    <span style="color:#569cd6">public</span> <span style="color:#569cd6">static</span> <span style="color:#569cd6">final</span> <span style="color:#4ec9b0">LogicStatic</span> <span style="color:#9cdcfe">INSTANCE</span> <span style="color:#d4d4d4">=</span> <span style="color:#c586c0">new</span> <span style="color:#dcdcaa">LogicStatic</span><span style="color:#da70d6">(</span><span style="color:#da70d6">)</span><span style="color:#d4d4d4">;</span></div><div class="ln" style="top:794px"><span class="u" style="letter-spacing:0.227px;">56</span></div><div class="cl" style="top:793px">    <span style="color:#569cd6">public</span> <span style="color:#569cd6">static</span> <span style="color:#569cd6">final</span> <span style="color:#4ec9b0">long</span> <span style="color:#9cdcfe">OK_HTTP_TIME_SECOND</span> <span style="color:#d4d4d4">=</span> <span style="color:#b5cea8">45</span><span style="color:#d4d4d4">;</span></div><div class="ln" style="top:813px"><span class="u" style="letter-spacing:0.227px;">57</span></div><div class="cl" style="top:812px">    <span style="color:#569cd6">public</span> <span style="color:#569cd6">static</span> <span style="color:#569cd6">final</span> <span style="color:#4ec9b0">int</span> <span style="color:#9cdcfe">StationsStatusCacheSize</span> <span style="color:#d4d4d4">=</span> <span style="color:#b5cea8">2000</span><span style="color:#d4d4d4">;</span></div><div class="ln" style="top:832px"><span class="u" style="letter-spacing:0.227px;">58</span></div><div class="cl" style="top:831px">    <span style="color:#569cd6">private</span> <span style="color:#569cd6">static</span> <span style="color:#569cd6">final</span> <span style="color:#4ec9b0">HashMap</span><span style="color:#d4d4d4">&lt;</span><span style="color:#4ec9b0">Integer</span><span style="color:#d4d4d4">,</span> <span style="color:#4ec9b0">BitmapDescriptor</span><span style="color:#d4d4d4">&gt;</span> <span style="color:#d4d4d4">cachedMapIcons</span> <span style="color:#d4d4d4">=</span> <span style="color:#c586c0">new</span> <span style="color:#4ec9b0">HashMap</span><span style="color:#d4d4d4">&lt;</span><span style="color:#d4d4d4">&gt;</span><span style="color:#da70d6">(</span><span style="color:#da70d6">)</span><span style="color:#d4d4d4">;</span></div><div class="ln" style="top:851px"><span class="u" style="letter-spacing:0.227px;">59</span></div><div class="cl" style="top:850px">    <span style="color:#569cd6">private</span> <span style="color:#569cd6">static</span> <span style="color:#569cd6">final</span> <span style="color:#4ec9b0">boolean</span> <span style="color:#9cdcfe">isApiTest</span> <span style="color:#d4d4d4">=</span> <span style="color:#9cdcfe">StringsKt</span><span style="color:#d4d4d4">.</span><span style="color:#dcdcaa">contains</span><span style="color:#da70d6">(</span><span style="color:#179fff">(</span><span style="color:#d4d4d4">CharSequence</span><span style="color:#179fff">)</span> <span style="color:#9cdcfe">BuildConfig</span><span style="color:#d4d4d4">.</span><span style="color:#9cdcfe">FLAVOR</span><span style="color:#d4d4d4">,</span> <span style="color:#179fff">(</span><span style="color:#d4d4d4">CharSequence</span><span style="color:#179fff">)</span> <span style="color:#ce9178">&quot;test&quot;</span><span style="color:#d4d4d4">,</span> <span style="color:#569cd6">true</span><span style="color:#da70d6">)</span><span style="color:#d4d4d4">;</span></div><div class="ln" style="top:870px"><span class="u" style="letter-spacing:0.227px;">60</span></div><div class="cl" style="top:869px">    <span style="color:#569cd6">public</span> <span style="color:#569cd6">static</span> <span style="color:#569cd6">final</span> <span style="color:#4ec9b0">boolean</span> <span style="color:#9cdcfe">isWhiteLabel</span> <span style="color:#d4d4d4">=</span> <span style="color:#da70d6">(</span><span style="color:#d4d4d4">!</span><span style="color:#9cdcfe">Intrinsics</span><span style="color:#d4d4d4">.</span><span style="color:#dcdcaa">areEqual</span><span style="color:#179fff">(</span><span style="color:#ffd700">(</span><span style="color:#d4d4d4">Object</span><span style="color:#ffd700">)</span> <span style="color:#9cdcfe">BuildConfig</span><span style="color:#d4d4d4">.</span><span style="color:#9cdcfe">FLAVOR</span><span style="color:#d4d4d4">,</span> <span style="color:#ffd700">(</span><span style="color:#d4d4d4">Object</span><span style="color:#ffd700">)</span> <span style="color:#ce9178">&quot;virta&quot;</span><span style="color:#179fff">)</span><span style="color:#da70d6">)</span><span style="color:#d4d4d4">;</span></div><div class="ln" style="top:889px"><span class="u" style="letter-spacing:0.227px;">61</span></div><div class="cl" style="top:888px">    <span style="color:#569cd6">private</span> <span style="color:#569cd6">static</span> <span style="color:#569cd6">final</span> <span style="color:#4ec9b0">String</span> <span style="color:#9cdcfe">kwFormat</span> <span style="color:#d4d4d4">=</span> <span style="color:#ce9178">&quot;%s kW&quot;</span><span style="color:#d4d4d4">;</span></div><div class="ln" style="top:908px"><span class="u" style="letter-spacing:0.227px;">62</span></div><div class="cl" style="top:907px">    <span style="color:#569cd6">private</span> <span style="color:#569cd6">static</span> <span style="color:#569cd6">final</span> <span style="color:#4ec9b0">String</span> <span style="color:#9cdcfe">kwhFormat</span> <span style="color:#d4d4d4">=</span> <span style="color:#ce9178">&quot;%s kWh&quot;</span><span style="color:#d4d4d4">;</span></div><div class="ln" style="top:927px"><span class="u" style="letter-spacing:0.227px;">63</span></div><div class="cl" style="top:926px">    <span style="color:#569cd6">private</span> <span style="color:#569cd6">static</span> <span style="color:#569cd6">final</span> <span style="color:#4ec9b0">SimpleDateFormat</span> <span style="color:#9cdcfe">simpleDateFormatApiStations</span> <span style="color:#d4d4d4">=</span> <span style="color:#c586c0">new</span> <span style="color:#dcdcaa">SimpleDateFormat</span><span style="color:#da70d6">(</span><span style="color:#ce9178">&quot;yyyy-MM-dd HH:mm:ss&quot;</span><span style="color:#d4d4d4">,</span> <span style="color:#9cdcfe">Locale</span><span style="color:#d4d4d4">.</span><span style="color:#9cdcfe">US</span><span style="color:#da70d6">)</span><span style="color:#d4d4d4">;</span></div><div class="ln" style="top:946px"><span class="u" style="letter-spacing:0.227px;">64</span></div><div class="cl" style="top:945px">    <span style="color:#569cd6">private</span> <span style="color:#569cd6">static</span> <span style="color:#569cd6">final</span> <span style="color:#4ec9b0">SimpleDateFormat</span> <span style="color:#9cdcfe">simpleDateFormatIso</span> <span style="color:#d4d4d4">=</span> <span style="color:#c586c0">new</span> <span style="color:#dcdcaa">SimpleDateFormat</span><span style="color:#da70d6">(</span><span style="color:#ce9178">&quot;yyyy-MM-dd&#x27;T&#x27;HH:mm:ss&quot;</span><span style="color:#d4d4d4">,</span> <span style="color:#9cdcfe">Locale</span><span style="color:#d4d4d4">.</span><span style="color:#9cdcfe">US</span><span style="color:#da70d6">)</span><span style="color:#d4d4d4">;</span></div><div class="ln" style="top:965px"><span class="u" style="letter-spacing:0.227px;">65</span></div><div class="cl" style="top:964px"></div><div class="ln" style="top:984px"><span class="u" style="letter-spacing:0.227px;">66</span></div><div class="cl" style="top:983px">    <span style="color:#569cd6">private</span> <span style="color:#dcdcaa">LogicStatic</span><span style="color:#da70d6">(</span><span style="color:#da70d6">)</span> <span style="color:#da70d6">{</span></div><div class="ln" style="top:1003px"><span class="u" style="letter-spacing:0.227px;">67</span></div><div class="cl" style="top:1002px">    <span style="color:#da70d6">}</span></div><div class="ln" style="top:1022px"><span class="u" style="letter-spacing:0.227px;">68</span></div><div class="cl" style="top:1021px"></div><div class="ln" style="top:1041px"><span class="u" style="letter-spacing:0.227px;">69</span></div><div class="cl" style="top:1040px">    <span style="color:#569cd6">public</span> <span style="color:#569cd6">final</span> <span style="color:#4ec9b0">boolean</span> <span style="color:#dcdcaa">isApiTest</span><span style="color:#da70d6">(</span><span style="color:#da70d6">)</span> <span style="color:#da70d6">{</span></div><div class="ln" style="top:1060px"><span class="u" style="letter-spacing:0.227px;">70</span></div><div class="cl" style="top:1059px">        <span style="color:#c586c0">return</span> <span style="color:#d4d4d4">isApiTest</span><span style="color:#d4d4d4">;</span></div><div class="ln" style="top:1079px"><span class="u" style="letter-spacing:0.227px;">71</span></div><div class="cl" style="top:1078px">    <span style="color:#da70d6">}</span></div><div class="ln" style="top:1098px"><span class="u" style="letter-spacing:0.227px;">72</span></div><div class="cl" style="top:1097px"></div><div class="ln" style="top:1117px"><span class="u" style="letter-spacing:0.227px;">73</span></div><div class="cl" style="top:1116px">    <span style="color:#569cd6">private</span> <span style="color:#569cd6">final</span> <span style="color:#4ec9b0">Calendar</span> <span style="color:#dcdcaa">calendarFromIso</span><span style="color:#da70d6">(</span><span style="color:#4ec9b0">String</span> <span style="color:#9cdcfe">str</span><span style="color:#da70d6">)</span> <span style="color:#da70d6">{</span></div><div class="ln" style="top:1136px"><span class="u" style="letter-spacing:0.227px;">74</span></div><div class="cl" style="top:1135px">        <span style="color:#4ec9b0">Calendar</span> <span style="color:#9cdcfe">instance</span> <span style="color:#d4d4d4">=</span> <span style="color:#9cdcfe">Calendar</span><span style="color:#d4d4d4">.</span><span style="color:#dcdcaa">getInstance</span><span style="color:#179fff">(</span><span style="color:#179fff">)</span><span style="color:#d4d4d4">;</span></div><div class="ln" style="top:1155px"><span class="u" style="letter-spacing:0.227px;">75</span></div><div class="cl" style="top:1154px">        <span style="color:#c586c0">try</span> <span style="color:#179fff">{</span></div><div class="ln" style="top:1174px"><span class="u" style="letter-spacing:0.227px;">76</span></div><div class="cl" style="top:1173px">            <span style="color:#4ec9b0">SimpleDateFormat</span> <span style="color:#9cdcfe">simpleDateFormat</span> <span style="color:#d4d4d4">=</span> <span style="color:#d4d4d4">simpleDateFormatApiStations</span><span style="color:#d4d4d4">;</span></div><div class="ln" style="top:1193px"><span class="u" style="letter-spacing:0.227px;">77</span></div><div class="cl" style="top:1192px">            <span style="color:#c586c0">if</span> <span style="color:#ffd700">(</span><span style="color:#d4d4d4">str</span> <span style="color:#d4d4d4">=</span><span style="color:#d4d4d4">=</span> <span style="color:#569cd6">null</span><span style="color:#ffd700">)</span> <span style="color:#ffd700">{</span></div><div class="ln" style="top:1212px"><span class="u" style="letter-spacing:0.227px;">78</span></div><div class="cl" style="top:1211px">                <span style="color:#d4d4d4">str</span> <span style="color:#d4d4d4">=</span> <span style="color:#ce9178">&quot;&quot;</span><span style="color:#d4d4d4">;</span></div><div class="ln" style="top:1231px"><span class="u" style="letter-spacing:0.227px;">79</span></div><div class="cl" style="top:1230px">            <span style="color:#ffd700">}</span></div><div class="ln" style="top:1250px"><span class="u" style="letter-spacing:0.227px;">80</span></div><div class="cl" style="top:1249px">            <span style="color:#4ec9b0">Date</span> <span style="color:#9cdcfe">parse</span> <span style="color:#d4d4d4">=</span> <span style="color:#9cdcfe">simpleDateFormat</span><span style="color:#d4d4d4">.</span><span style="color:#dcdcaa">parse</span><span style="color:#ffd700">(</span><span style="color:#d4d4d4">str</span><span style="color:#ffd700">)</span><span style="color:#d4d4d4">;</span></div><div class="ln" style="top:1269px"><span class="u" style="letter-spacing:0.227px;">81</span></div><div class="cl" style="top:1268px">            <span style="color:#c586c0">if</span> <span style="color:#ffd700">(</span><span style="color:#d4d4d4">parse</span> <span style="color:#d4d4d4">=</span><span style="color:#d4d4d4">=</span> <span style="color:#569cd6">null</span><span style="color:#ffd700">)</span> <span style="color:#ffd700">{</span></div></div><div class="abs" style="left:0;top:57px;width:918px;height:6px;box-shadow:#000 0 6px 6px -6px inset"></div><div class="abs" style="left:80px;top:1307px;width:19px;height:12px;background:rgba(121,121,121,.4);opacity:.6"></div><div class="abs" style="left:389px;top:57px;width:418px;height:33px;background:#252526;box-shadow:0 0 8px 2px rgba(0,0,0,.36)">
<svg class="abs" style="left:3px;top:9px" width="16" height="16" viewBox="0 0 16 16"><path d="M5.7 13.7 L5 13 L9.3 8.3 L5 3.700 L5.700 3 L10.500 8.300 Z" fill="#c5c5c5"/></svg>
<div class="abs" style="left:20px;top:4px;width:223px;height:25px;background:#3c3c3c;border:1px solid #007fd4;line-height:23px;font-size:13px;color:#ccc">
<span class="u" style="letter-spacing:0.694px;position:absolute;left:6px;top:1px">https</span><div class="abs" style="left:37.5px;top:4px;width:1px;height:16px;background:#aeafad"></div><span class="abs" style="left:160px;top:0;font-size:11px;color:#c5c5c5"><span class="u" style="letter-spacing:-0.133px;">Aa</span></span><span class="abs" style="left:182px;top:-1px;font-size:11px;color:#c5c5c5;"><span class="u" style="letter-spacing:0.344px;">ab</span></span><svg class="abs" style="left:179px;top:15px" width="20" height="5" viewBox="0 0 20 5" fill="none" stroke="#c5c5c5" stroke-width="1"><path d="M.5 0 V3.500 H18.500 V0"/></svg><svg class="abs" style="left:202px;top:4px" width="16" height="16" viewBox="0 0 16 16" fill="none" stroke="#c5c5c5" stroke-width="1.2"><rect x="2.500" y="10" width="3" height="3" fill="#c5c5c5" stroke="none"/><path d="M10.500 2 V9 M7.500 3.800 L13.500 7.200 M13.500 3.800 L7.500 7.200"/></svg></div><span class="abs" style="left:248px;top:2px;line-height:33px;font-size:12px;color:#ccc"><span class="u" style="letter-spacing:0.221px;">1 of 4</span></span><svg class="abs" style="left:321px;top:9.5px" width="16" height="16" viewBox="0 0 16 16" fill="none" stroke="#c5c5c5" stroke-width="1.1"><path d="M8 14 V2.500 M3.500 7 L8 2.500 L12.500 7"/></svg><svg class="abs" style="left:346px;top:9.5px" width="16" height="16" viewBox="0 0 16 16" fill="none" stroke="#c5c5c5" stroke-width="1.1"><path d="M8 2 V13.500 M3.500 9 L8 13.500 L12.500 9"/></svg><svg class="abs" style="left:370px;top:9.5px" width="16" height="16" viewBox="0 0 16 16" fill="none" stroke="#c5c5c5" stroke-width="1.1"><path d="M1.500 4.500 H14.500 M1.500 8 H14.500 M1.500 11.500 H10.500"/></svg><svg class="abs" style="left:395px;top:9.5px" width="16" height="16" viewBox="0 0 16 16" fill="none" stroke="#c5c5c5" stroke-width="1.1"><path d="M3.800 3.800 L12.200 12.200 M12.200 3.800 L3.800 12.200"/></svg></div><div class="abs" id="mm" style="left:821px;top:57px;width:97px;height:1262px;background:#1e1e1e"><svg width="97" height="1262" viewBox="0 0 97 1262" style="position:absolute;left:0;top:0"><rect x="8" y="90" width="89" height="2" fill="#264f78"/><rect x="8" y="92" width="89" height="6" fill="#a0680f"/><g fill="none" stroke-width="1.3"><path stroke="#569cd6" opacity="0.62" d="M8 0.75h6M8 2.75h6M8 4.75h6M8 6.75h6M8 8.75h6M8 10.75h6M8 12.75h6M8 14.75h6M8 16.75h6M8 18.75h6M8 20.75h6M8 22.75h6M8 24.75h6M8 26.75h6M8 28.75h6M8 30.75h6M8 32.75h6M8 34.75h6M8 36.75h6M8 38.75h6M8 40.75h6M8 42.75h6M8 44.75h6M8 46.75h6M8 48.75h6M8 50.75h6M8 52.75h6M8 54.75h6M8 56.75h6M8 58.75h6M8 60.75h6M8 62.75h6M8 64.75h6M8 66.75h6M8 68.75h6M8 70.75h6M8 72.75h6M8 74.75h6M8 76.75h6M8 78.75h6M8 88.75h6M15 88.75h5M21 88.75h5M12 90.75h6M19 90.75h6M26 90.75h5M12 92.75h6M19 92.75h6M26 92.75h5M12 94.75h6M19 94.75h6M26 94.75h5M12 96.75h6M19 96.75h6M26 96.75h5M12 98.75h6M19 98.75h6M26 98.75h5M12 100.75h6M19 100.75h6M26 100.75h5M12 102.75h6M19 102.75h6M26 102.75h5M12 104.75h7M20 104.75h6M27 104.75h5M12 106.75h7M20 106.75h6M27 106.75h5M12 108.75h6M19 108.75h6M26 108.75h5M12 110.75h7M20 110.75h6M27 110.75h5M12 112.75h7M20 112.75h6M27 112.75h5M12 114.75h7M20 114.75h6M27 114.75h5M12 116.75h7M20 116.75h6M27 116.75h5M12 120.75h7M12 126.75h6M19 126.75h5M12 134.75h7M20 134.75h5M31 142.75h4M33 150.75h4M12 170.75h6M19 170.75h5M68 174.75h4M12 184.75h6M19 184.75h5M68 188.75h4M12 198.75h6M19 198.75h5M68 202.75h4M12 220.75h6M19 220.75h5M12 334.75h6M19 334.75h5M23 336.75h9M41 336.75h9M19 352.75h6M35 352.75h14M50 352.75h3M12 360.75h6M19 360.75h5M12 376.75h6M19 376.75h5M56 386.75h7M64 386.75h6M12 406.75h6M19 406.75h5M12 428.75h6M19 428.75h5M12 446.75h6M19 446.75h5M57 450.75h6M12 466.75h6M19 466.75h5M12 480.75h6M19 480.75h5M65 490.75h7M92 490.75h4M20 492.75h4M30 492.75h14M67 496.75h9M12 504.75h6M19 504.75h5M12 536.75h6M19 536.75h5M23 538.75h4M19 542.75h3M53 542.75h10M64 542.75h6M12 552.75h6M19 552.75h5M67 562.75h5M88 566.75h8M12 576.75h6M19 576.75h5M23 582.75h10M70 594.75h5M91 594.75h6M12 612.75h6M19 612.75h5M45 614.75h1M35 624.75h3M12 634.75h6M19 634.75h5M80 648.75h10M91 648.75h6M12 662.75h6M19 662.75h5M12 682.75h6M19 682.75h5M12 700.75h6M19 700.75h5M12 722.75h6M19 722.75h5M31 728.75h4M12 932.75h6M19 932.75h5M12 944.75h6M19 944.75h5M36 954.75h9M12 962.75h6M19 962.75h5M12 988.75h6M19 988.75h5"/><path stroke="#d4d4d4" opacity="0.36" d="M15 0.75h65M15 2.75h51M15 4.75h41M15 6.75h47M15 8.75h44M15 10.75h46M15 12.75h43M15 14.75h49M14 16.75h42M14 18.75h40M14 20.75h48M14 22.75h45M14 24.75h55M14 26.75h54M14 28.75h31M14 30.75h28M14 32.75h18M14 34.75h20M14 36.75h16M14 38.75h19M14 40.75h20M14 42.75h18M14 44.75h31M14 46.75h25M14 48.75h32M14 50.75h17M14 52.75h15M14 54.75h34M14 56.75h32M14 58.75h43M14 60.75h24M14 62.75h22M14 64.75h23M14 66.75h24M14 68.75h22M14 70.75h26M14 72.75h38M14 74.75h32M14 76.75h37M14 78.75h37M8 82.75h1M18 82.75h9M28 82.75h1M62 90.75h1M94 90.75h1M56 92.75h1M93 92.75h1M56 94.75h1M84 94.75h1M50 96.75h1M82 96.75h1M53 98.75h1M72 98.75h1M57 100.75h1M61 100.75h1M60 102.75h1M66 102.75h1M40 104.75h1M48 104.75h1M66 104.75h1M68 104.75h14M83 104.75h1M96 104.75h1M51 106.75h1M62 106.75h1M73 106.75h12M53 108.75h1M56 108.75h1M67 108.75h1M78 108.75h6M49 110.75h1M58 110.75h1M50 112.75h1M60 112.75h1M78 114.75h1M70 116.75h1M23 128.75h9M32 128.75h1M34 136.75h1M44 136.75h1M58 136.75h1M54 140.75h1M56 140.75h27M83 140.75h1M24 142.75h3M28 142.75h1M29 142.75h1M24 144.75h3M28 144.75h1M32 144.75h1M31 148.75h1M49 148.75h1M56 148.75h3M60 148.75h1M24 150.75h5M30 150.75h1M31 150.75h1M62 172.75h1M30 174.75h1M62 186.75h1M30 188.75h1M62 200.75h1M30 202.75h1M16 342.75h11M44 348.75h12M95 348.75h2M22 350.75h8M30 378.75h3M71 386.75h8M80 394.75h6M16 396.75h7M82 418.75h5M24 436.75h11M36 436.75h6M16 438.75h9M78 448.75h3M88 448.75h7M20 450.75h3M34 450.75h10M26 454.75h14M16 456.75h14M40 458.75h11M22 468.75h9M56 482.75h3M35 486.75h5M22 494.75h4M67 494.75h9M92 494.75h5M39 496.75h14M54 496.75h7M77 496.75h4M82 496.75h9M92 496.75h3M34 508.75h11M24 514.75h3M24 518.75h7M33 520.75h1M27 522.75h5M45 522.75h8M33 524.75h3M31 528.75h10M88 528.75h4M93 528.75h4M51 538.75h13M41 540.75h9M31 542.75h7M78 542.75h9M24 558.75h3M23 562.75h14M52 564.75h4M66 566.75h12M79 566.75h8M45 578.75h8M34 582.75h11M78 586.75h10M93 588.75h4M56 594.75h3M60 594.75h9M42 602.75h2M16 622.75h5M29 622.75h5M53 624.75h13M85 624.75h11M31 626.75h8M40 626.75h11M62 626.75h10M73 626.75h6M80 626.75h12M93 626.75h4M26 640.75h4M24 646.75h8M52 646.75h7M84 646.75h12M22 648.75h13M66 648.75h13M23 668.75h7M60 672.75h12M40 686.75h6M49 710.75h11M87 710.75h3M45 726.75h13M90 726.75h7M28 728.75h2M22 934.75h3M28 954.75h7M45 972.75h5"/><path stroke="#4ec9b0" opacity="0.62" d="M9 82.75h8M27 88.75h11M32 90.75h6M32 92.75h6M32 94.75h6M32 96.75h6M32 98.75h11M32 100.75h4M32 102.75h3M33 104.75h7M41 104.75h7M50 104.75h16M89 104.75h7M33 106.75h7M32 108.75h7M33 110.75h6M33 112.75h6M33 114.75h16M33 116.75h16M25 126.75h7M26 134.75h8M51 134.75h6M16 136.75h8M20 140.75h16M20 148.75h4M20 156.75h6M27 156.75h9M25 160.75h9M25 170.75h8M16 172.75h22M64 172.75h22M16 174.75h6M25 184.75h8M16 186.75h22M64 186.75h22M16 188.75h6M25 198.75h8M43 198.75h4M16 200.75h22M64 200.75h22M16 202.75h6M25 220.75h4M30 220.75h4M35 220.75h6M62 220.75h22M25 334.75h8M16 340.75h6M16 348.75h9M57 348.75h5M25 360.75h4M16 362.75h16M16 368.75h15M25 376.75h6M53 376.75h6M16 378.75h13M16 388.75h12M16 392.75h12M16 394.75h13M16 398.75h5M25 406.75h7M16 416.75h7M33 416.75h4M16 418.75h4M16 420.75h16M25 428.75h5M46 428.75h6M16 432.75h12M16 434.75h16M25 446.75h5M41 446.75h6M16 448.75h4M21 448.75h4M16 452.75h12M29 452.75h1M16 454.75h9M25 466.75h6M16 468.75h5M16 470.75h5M25 480.75h5M25 504.75h4M16 516.75h8M25 516.75h13M16 518.75h7M32 518.75h6M16 524.75h16M16 528.75h14M56 528.75h9M25 536.75h5M44 536.75h6M25 552.75h7M44 552.75h6M16 554.75h8M25 576.75h7M16 578.75h15M16 588.75h13M38 588.75h7M16 592.75h8M16 598.75h8M16 600.75h13M16 602.75h16M33 602.75h8M25 612.75h6M16 618.75h4M16 626.75h14M25 634.75h6M52 634.75h6M16 636.75h14M49 636.75h4M54 636.75h2M16 652.75h6M23 652.75h7M25 662.75h5M20 666.75h9M45 666.75h1M16 672.75h10M16 674.75h8M77 674.75h11M25 682.75h6M25 700.75h5M45 700.75h6M16 710.75h7M24 710.75h9M34 710.75h14M16 712.75h6M25 722.75h4M47 722.75h6M25 932.75h6M25 944.75h5M47 944.75h6M20 948.75h15M25 962.75h8M45 962.75h6M20 966.75h9M25 988.75h4M30 988.75h4M35 988.75h6M62 988.75h22"/><path stroke="#ffd700" opacity="0.62" d="M17 82.75h1M39 88.75h1M77 108.75h1M84 108.75h1M23 142.75h1M35 142.75h1M37 142.75h1M20 146.75h1M55 148.75h1M59 148.75h1M23 150.75h1M37 150.75h1M39 150.75h1M20 154.75h1M27 730.75h1M35 730.75h1M37 730.75h1M20 922.75h1"/><path stroke="#da70d6" opacity="0.62" d="M30 82.75h1M70 98.75h1M71 98.75h1M71 106.75h1M55 108.75h1M92 116.75h1M31 120.75h1M32 120.75h1M34 120.75h1M12 122.75h1M42 126.75h1M43 126.75h1M45 126.75h1M12 130.75h1M50 134.75h1M61 134.75h1M63 134.75h1M12 166.75h1M48 170.75h1M49 170.75h1M51 170.75h1M12 180.75h1M43 184.75h1M44 184.75h1M46 184.75h1M12 194.75h1M42 198.75h1M47 198.75h1M49 198.75h1M12 208.75h1M12 330.75h1M47 334.75h1M48 334.75h1M50 334.75h1M12 356.75h1M41 360.75h1M42 360.75h1M44 360.75h1M12 372.75h1M52 376.75h1M59 376.75h1M61 376.75h1M12 402.75h1M42 406.75h1M43 406.75h1M45 406.75h1M12 424.75h1M45 428.75h1M60 428.75h1M62 428.75h1M12 442.75h1M40 446.75h1M56 446.75h1M58 446.75h1M12 462.75h1M43 466.75h1M44 466.75h1M46 466.75h1M12 476.75h1M43 480.75h1M44 480.75h1M46 480.75h1M12 500.75h1M41 504.75h1M42 504.75h1M44 504.75h1M12 532.75h1M43 536.75h1M53 536.75h1M55 536.75h1M12 548.75h1M43 552.75h1M51 552.75h1M53 552.75h1M12 572.75h1M50 576.75h1M51 576.75h1M53 576.75h1M12 608.75h1M46 612.75h1M47 612.75h1M49 612.75h1M12 630.75h1M51 634.75h1M59 634.75h1M61 634.75h1M12 658.75h1M41 662.75h1M42 662.75h1M44 662.75h1M12 678.75h1M51 682.75h1M52 682.75h1M54 682.75h1M12 696.75h1M44 700.75h1M57 700.75h1M59 700.75h1M12 716.75h1M46 722.75h1M56 722.75h1M58 722.75h1M12 928.75h1M43 932.75h1M44 932.75h1M46 932.75h1M12 940.75h1M46 944.75h1M58 944.75h1M60 944.75h1M12 958.75h1M44 962.75h1M60 962.75h1M62 962.75h1M12 976.75h1"/><path stroke="#ce9178" opacity="0.62" d="M31 82.75h1M34 82.75h5M41 82.75h4M49 82.75h4M55 82.75h4M61 82.75h4M69 82.75h4M75 82.75h4M81 82.75h4M89 82.75h4M64 90.75h30M58 92.75h35M58 94.75h26M52 96.75h30M51 110.75h7M52 112.75h8M93 116.75h4M30 144.75h2M53 156.75h1M66 176.75h12M79 176.75h10M66 190.75h12M79 190.75h10M66 204.75h12M79 204.75h10M55 328.75h6M62 328.75h2M65 328.75h9M75 328.75h22M28 338.75h6M23 340.75h9M33 340.75h5M28 342.75h6M16 364.75h9M29 388.75h9M39 388.75h5M45 388.75h5M28 390.75h6M29 392.75h11M79 392.75h4M84 392.75h2M30 394.75h11M69 394.75h10M20 412.75h5M31 418.75h11M43 418.75h7M52 432.75h3M40 434.75h10M20 436.75h3M26 438.75h7M26 448.75h9M47 454.75h3M58 468.75h6M22 470.75h8M16 472.75h4M37 482.75h10M60 482.75h4M20 510.75h3M87 522.75h3M37 524.75h7M16 526.75h11M66 528.75h10M66 544.75h8M89 544.75h7M25 554.75h4M30 554.75h10M91 564.75h3M28 568.75h10M32 578.75h5M54 578.75h8M63 578.75h1M78 588.75h7M16 596.75h5M32 618.75h2M58 626.75h3M31 640.75h14M29 674.75h13M43 674.75h8M52 674.75h13M66 674.75h10M31 690.75h10M64 690.75h9M85 690.75h1M42 702.75h7M61 710.75h10M35 724.75h5M41 724.75h13M55 724.75h3M59 724.75h4M90 724.75h7M46 734.75h5M46 744.75h5M46 754.75h5M46 764.75h5M46 774.75h5M46 784.75h5M46 794.75h5M46 804.75h5M46 814.75h5M46 824.75h5M46 834.75h5M46 844.75h5M46 854.75h5M46 864.75h5M46 874.75h5M46 884.75h5M46 894.75h5M46 904.75h5M46 914.75h5M37 970.75h7"/><path stroke="#d7ba7d" opacity="0.62" d="M32 82.75h2M39 82.75h2M45 82.75h2M47 82.75h2M53 82.75h2M59 82.75h2M65 82.75h2M67 82.75h2M73 82.75h2M79 82.75h2M85 82.75h2M87 82.75h2M93 82.75h2M95 82.75h2"/><path stroke="#6a9955" opacity="0.8" d="M8 84.75h46M8 86.75h35M12 212.75h2M15 212.75h8M24 212.75h4M29 212.75h10M40 212.75h6M47 212.75h7M55 212.75h5M61 212.75h10M72 212.75h4M77 212.75h5M16 214.75h2M19 214.75h3M23 214.75h2M26 214.75h5M32 214.75h8M41 214.75h9M51 214.75h8M60 214.75h14M75 214.75h8M84 214.75h13M13 216.75h2M12 218.75h2M15 218.75h4M20 218.75h9M30 218.75h10M41 218.75h6M48 218.75h4M53 218.75h2M56 218.75h9M66 218.75h5M72 218.75h2M16 222.75h2M16 224.75h8M20 226.75h2M23 226.75h1M25 226.75h1M27 226.75h2M30 226.75h1M32 226.75h4M37 226.75h6M20 228.75h4M25 228.75h6M20 230.75h2M23 230.75h1M25 230.75h1M20 232.75h2M23 232.75h1M25 232.75h1M20 234.75h2M23 234.75h1M25 234.75h1M27 234.75h2M30 234.75h1M32 234.75h4M37 234.75h8M16 236.75h8M20 238.75h2M23 238.75h1M25 238.75h1M27 238.75h2M30 238.75h1M32 238.75h4M37 238.75h8M20 240.75h2M23 240.75h1M25 240.75h3M20 242.75h2M23 242.75h1M25 242.75h1M27 242.75h2M30 242.75h1M32 242.75h4M37 242.75h6M16 244.75h8M20 246.75h2M23 246.75h1M25 246.75h3M20 248.75h2M23 248.75h1M25 248.75h1M20 250.75h2M23 250.75h1M25 250.75h1M27 250.75h2M30 250.75h1M32 250.75h4M37 250.75h7M16 252.75h8M20 254.75h2M23 254.75h1M25 254.75h1M27 254.75h2M30 254.75h1M32 254.75h4M37 254.75h7M20 256.75h2M23 256.75h1M25 256.75h1M27 256.75h2M30 256.75h1M32 256.75h4M37 256.75h7M20 258.75h2M23 258.75h1M25 258.75h1M27 258.75h2M30 258.75h1M32 258.75h4M37 258.75h6M20 260.75h6M27 260.75h2M30 260.75h1M32 260.75h2M35 260.75h15M20 262.75h6M27 262.75h2M30 262.75h1M32 262.75h2M35 262.75h10M20 264.75h2M23 264.75h1M25 264.75h1M27 264.75h2M30 264.75h1M32 264.75h4M37 264.75h8M16 266.75h8M20 268.75h6M27 268.75h2M30 268.75h1M32 268.75h2M35 268.75h15M20 270.75h2M23 270.75h1M25 270.75h1M27 270.75h2M30 270.75h1M32 270.75h4M37 270.75h8M20 272.75h4M25 272.75h6M20 274.75h2M23 274.75h1M25 274.75h2M16 276.75h8M20 278.75h2M23 278.75h1M25 278.75h18M45 278.75h5M51 278.75h9M20 280.75h4M25 280.75h6M16 282.75h8M20 284.75h2M23 284.75h1M25 284.75h3M20 286.75h2M23 286.75h1M25 286.75h3M20 288.75h2M23 288.75h1M25 288.75h1M27 288.75h2M30 288.75h1M32 288.75h4M37 288.75h7M20 290.75h2M23 290.75h1M25 290.75h1M27 290.75h2M30 290.75h1M32 290.75h4M37 290.75h7M16 292.75h8M20 294.75h2M23 294.75h1M25 294.75h1M27 294.75h2M30 294.75h1M32 294.75h4M37 294.75h7M20 296.75h2M23 296.75h1M25 296.75h1M20 298.75h4M25 298.75h6M20 300.75h2M23 300.75h1M25 300.75h1M27 300.75h2M30 300.75h1M32 300.75h4M37 300.75h8M20 302.75h2M23 302.75h1M25 302.75h3M16 304.75h8M20 306.75h2M23 306.75h1M25 306.75h1M27 306.75h2M30 306.75h1M32 306.75h4M37 306.75h8M20 308.75h6M27 308.75h3M31 308.75h5M37 308.75h29M68 308.75h19M20 310.75h6M27 310.75h3M31 310.75h5M37 310.75h17M68 310.75h17M20 312.75h6M27 312.75h3M31 312.75h5M37 312.75h29M68 312.75h16M20 314.75h6M27 314.75h3M31 314.75h5M37 314.75h8M68 314.75h19M20 316.75h6M27 316.75h3M31 316.75h5M37 316.75h19M68 316.75h10M20 318.75h6M27 318.75h3M31 318.75h5M37 318.75h27M68 318.75h8M20 320.75h6M27 320.75h3M31 320.75h5M37 320.75h23M68 320.75h6M20 322.75h6M27 322.75h3M31 322.75h5M37 322.75h14M68 322.75h14M20 324.75h6M27 324.75h3M31 324.75h5M37 324.75h12M68 324.75h12M16 326.75h1M12 980.75h2M15 980.75h8M24 980.75h4M29 980.75h10M40 980.75h6M47 980.75h7M55 980.75h5M61 980.75h10M72 980.75h4M77 980.75h5M16 982.75h2M19 982.75h3M23 982.75h2M26 982.75h5M32 982.75h8M41 982.75h9M51 982.75h8M60 982.75h14M75 982.75h8M84 982.75h13M13 984.75h2M12 986.75h2M15 986.75h4M20 986.75h9M30 986.75h10M41 986.75h6M48 986.75h4M53 986.75h2M56 986.75h9M66 986.75h5M72 986.75h2M16 990.75h2M16 992.75h8M20 994.75h2M23 994.75h1M25 994.75h1M20 996.75h2M23 996.75h1M25 996.75h1M27 996.75h2M30 996.75h1M32 996.75h4M37 996.75h8M20 998.75h2M23 998.75h1M25 998.75h1M27 998.75h2M30 998.75h1M32 998.75h4M37 998.75h6M20 1000.75h2M23 1000.75h1M25 1000.75h1M20 1002.75h2M23 1002.75h1M25 1002.75h3M20 1004.75h6M27 1004.75h2M30 1004.75h1M32 1004.75h2M35 1004.75h11M16 1006.75h8M20 1008.75h6M27 1008.75h5M33 1008.75h12M46 1008.75h7M54 1008.75h8M63 1008.75h2M66 1008.75h1M68 1008.75h6M75 1008.75h5M81 1008.75h16M20 1010.75h2M23 1010.75h1M25 1010.75h1M20 1012.75h2M23 1012.75h1M25 1012.75h18M45 1012.75h5M51 1012.75h10M20 1014.75h2M23 1014.75h1M25 1014.75h1M20 1016.75h6M27 1016.75h5M33 1016.75h12M46 1016.75h7M54 1016.75h8M63 1016.75h2M66 1016.75h1M68 1016.75h6M75 1016.75h5M81 1016.75h16M20 1018.75h6M27 1018.75h2M30 1018.75h1M32 1018.75h2M35 1018.75h12M16 1020.75h8M20 1022.75h2M23 1022.75h1M25 1022.75h18M45 1022.75h5M51 1022.75h11M20 1024.75h6M27 1024.75h5M33 1024.75h12M46 1024.75h7M54 1024.75h8M63 1024.75h2M66 1024.75h1M68 1024.75h6M75 1024.75h5M81 1024.75h16M16 1026.75h8M20 1028.75h2M23 1028.75h1M25 1028.75h18M45 1028.75h5M51 1028.75h11M20 1030.75h2M23 1030.75h1M25 1030.75h1M27 1030.75h2M30 1030.75h1M32 1030.75h4M37 1030.75h8M20 1032.75h6M27 1032.75h2M30 1032.75h1M32 1032.75h2M35 1032.75h12M20 1034.75h2M23 1034.75h1M25 1034.75h1M27 1034.75h2M30 1034.75h1M32 1034.75h4M37 1034.75h6M16 1036.75h8M20 1038.75h2M23 1038.75h1M25 1038.75h1M27 1038.75h2M30 1038.75h1M32 1038.75h4M37 1038.75h7M20 1040.75h6M27 1040.75h5M33 1040.75h12M46 1040.75h7M54 1040.75h8M63 1040.75h2M66 1040.75h1M68 1040.75h6M75 1040.75h5M81 1040.75h16M20 1042.75h2M23 1042.75h1M25 1042.75h2M16 1044.75h8M20 1046.75h2M23 1046.75h1M25 1046.75h1M27 1046.75h2M30 1046.75h1M32 1046.75h4M37 1046.75h8M20 1048.75h2M23 1048.75h1M25 1048.75h1M27 1048.75h2M30 1048.75h1M32 1048.75h4M37 1048.75h6M20 1050.75h2M23 1050.75h1M25 1050.75h1M27 1050.75h2M30 1050.75h1M32 1050.75h4M37 1050.75h8M20 1052.75h2M23 1052.75h1M25 1052.75h18M45 1052.75h5M51 1052.75h12M20 1054.75h2M23 1054.75h1M25 1054.75h18M45 1054.75h5M51 1054.75h9M20 1056.75h2M23 1056.75h1M25 1056.75h1M27 1056.75h2M30 1056.75h1M32 1056.75h4M37 1056.75h7M16 1058.75h8M20 1060.75h2M23 1060.75h1M25 1060.75h3M20 1062.75h2M23 1062.75h1M25 1062.75h1M27 1062.75h2M30 1062.75h1M32 1062.75h4M37 1062.75h7M20 1064.75h2M23 1064.75h1M25 1064.75h2M20 1066.75h2M23 1066.75h1M25 1066.75h1M27 1066.75h2M30 1066.75h1M32 1066.75h4M37 1066.75h8M16 1068.75h8M20 1070.75h2M23 1070.75h1M25 1070.75h2M20 1072.75h2M23 1072.75h1M25 1072.75h1M27 1072.75h2M30 1072.75h1M32 1072.75h4M37 1072.75h6M16 1074.75h8M20 1076.75h2M23 1076.75h1M25 1076.75h18M45 1076.75h5M51 1076.75h12M20 1078.75h2M23 1078.75h1M25 1078.75h1M27 1078.75h2M30 1078.75h1M32 1078.75h4M37 1078.75h6M20 1080.75h2M23 1080.75h1M25 1080.75h18M45 1080.75h5M51 1080.75h10M20 1082.75h2M23 1082.75h1M25 1082.75h18M45 1082.75h5M51 1082.75h11M20 1084.75h2M23 1084.75h1M25 1084.75h18M45 1084.75h5M51 1084.75h8M16 1086.75h8M20 1088.75h2M23 1088.75h1M25 1088.75h1M16 1090.75h8M20 1092.75h2M23 1092.75h1M25 1092.75h1M27 1092.75h2M30 1092.75h1M32 1092.75h4M37 1092.75h6M20 1094.75h2M23 1094.75h1M25 1094.75h1M27 1094.75h2M30 1094.75h1M32 1094.75h4M37 1094.75h6M16 1096.75h8M20 1098.75h2M23 1098.75h1M25 1098.75h1M27 1098.75h2M30 1098.75h1M32 1098.75h4M37 1098.75h8M20 1100.75h2M23 1100.75h1M25 1100.75h2M20 1102.75h2M23 1102.75h1M25 1102.75h1M27 1102.75h2M30 1102.75h1M32 1102.75h4M37 1102.75h8M20 1104.75h2M23 1104.75h1M25 1104.75h18M45 1104.75h5M51 1104.75h10M20 1106.75h2M23 1106.75h1M25 1106.75h1M27 1106.75h2M30 1106.75h1M32 1106.75h4M37 1106.75h7M20 1108.75h2M23 1108.75h1M25 1108.75h1M27 1108.75h2M30 1108.75h1M32 1108.75h4M37 1108.75h7M20 1110.75h2M23 1110.75h1M25 1110.75h3M20 1112.75h2M23 1112.75h1M25 1112.75h3M16 1114.75h8M20 1116.75h6M27 1116.75h2M30 1116.75h1M32 1116.75h2M35 1116.75h15M20 1118.75h6M27 1118.75h2M30 1118.75h1M32 1118.75h2M35 1118.75h12M20 1120.75h2M23 1120.75h1M25 1120.75h1M27 1120.75h2M30 1120.75h1M32 1120.75h4M37 1120.75h7M20 1122.75h2M23 1122.75h1M25 1122.75h2M20 1124.75h6M27 1124.75h5M33 1124.75h12M46 1124.75h7M54 1124.75h8M63 1124.75h2M66 1124.75h1M68 1124.75h6M75 1124.75h5M81 1124.75h16M20 1126.75h6M27 1126.75h5M33 1126.75h12M46 1126.75h7M54 1126.75h8M63 1126.75h2M66 1126.75h1M68 1126.75h6M75 1126.75h5M81 1126.75h16M20 1128.75h6M27 1128.75h2M30 1128.75h1M32 1128.75h2M35 1128.75h15M20 1130.75h2M23 1130.75h1M25 1130.75h1M27 1130.75h2M30 1130.75h1M32 1130.75h4M37 1130.75h7M16 1132.75h8M20 1134.75h2M23 1134.75h1M25 1134.75h1M20 1136.75h2M23 1136.75h1M25 1136.75h2M20 1138.75h6M27 1138.75h2M30 1138.75h1M32 1138.75h2M35 1138.75h14M20 1140.75h6M27 1140.75h2M30 1140.75h1M32 1140.75h2M35 1140.75h16M20 1142.75h6M27 1142.75h2M30 1142.75h1M32 1142.75h2M35 1142.75h13M16 1144.75h8M20 1146.75h2M23 1146.75h1M25 1146.75h1M20 1148.75h2M23 1148.75h1M25 1148.75h18M45 1148.75h5M51 1148.75h9M16 1150.75h8M20 1152.75h2M23 1152.75h1M25 1152.75h1M27 1152.75h2M30 1152.75h1M32 1152.75h4M37 1152.75h8M20 1154.75h2M23 1154.75h1M25 1154.75h1M20 1156.75h2M23 1156.75h1M25 1156.75h3M20 1158.75h2M23 1158.75h1M25 1158.75h18M45 1158.75h5M51 1158.75h11M16 1160.75h8M20 1162.75h6M27 1162.75h2M30 1162.75h1M32 1162.75h2M35 1162.75h16M20 1164.75h2M23 1164.75h1M25 1164.75h1M27 1164.75h2M30 1164.75h1M32 1164.75h4M37 1164.75h6M20 1166.75h2M23 1166.75h1M25 1166.75h18M45 1166.75h5M51 1166.75h11M20 1168.75h2M23 1168.75h1M25 1168.75h1M16 1170.75h8M20 1172.75h2M23 1172.75h1M25 1172.75h1M27 1172.75h2M30 1172.75h1M32 1172.75h4M37 1172.75h8M20 1174.75h2M23 1174.75h1M25 1174.75h2M20 1176.75h2M23 1176.75h1M25 1176.75h1M27 1176.75h2M30 1176.75h1M32 1176.75h4M37 1176.75h7M16 1178.75h8M20 1180.75h2M23 1180.75h1M25 1180.75h18M45 1180.75h5M51 1180.75h10M16 1182.75h8M20 1184.75h2M23 1184.75h1M25 1184.75h2M20 1186.75h2M23 1186.75h1M25 1186.75h2M20 1188.75h2M23 1188.75h1M25 1188.75h3M16 1190.75h8M20 1192.75h2M23 1192.75h1M25 1192.75h1M27 1192.75h2M30 1192.75h1M32 1192.75h4M37 1192.75h7M16 1194.75h8M20 1196.75h6M27 1196.75h2M30 1196.75h1M32 1196.75h2M35 1196.75h16M20 1198.75h2M23 1198.75h1M25 1198.75h1M16 1200.75h8M20 1202.75h2M23 1202.75h1M25 1202.75h1M27 1202.75h2M30 1202.75h1M32 1202.75h4M37 1202.75h7M20 1204.75h2M23 1204.75h1M25 1204.75h18M45 1204.75h5M51 1204.75h9M20 1206.75h2M23 1206.75h1M25 1206.75h1M27 1206.75h2M30 1206.75h1M32 1206.75h4M37 1206.75h7M20 1208.75h2M23 1208.75h1M25 1208.75h1M27 1208.75h2M30 1208.75h1M32 1208.75h4M37 1208.75h6M20 1210.75h2M23 1210.75h1M25 1210.75h1M27 1210.75h2M30 1210.75h1M32 1210.75h4M37 1210.75h6M20 1212.75h6M27 1212.75h2M30 1212.75h1M32 1212.75h2M35 1212.75h15M20 1214.75h2M23 1214.75h1M25 1214.75h3M20 1216.75h6M27 1216.75h5M33 1216.75h12M46 1216.75h7M54 1216.75h8M63 1216.75h2M66 1216.75h1M68 1216.75h6M75 1216.75h5M81 1216.75h16M16 1218.75h8M20 1220.75h2M23 1220.75h1M25 1220.75h18M45 1220.75h5M51 1220.75h9M20 1222.75h2M23 1222.75h1M25 1222.75h18M45 1222.75h5M51 1222.75h10M16 1224.75h8M20 1226.75h2M23 1226.75h1M25 1226.75h2M20 1228.75h2M23 1228.75h1M25 1228.75h18M45 1228.75h5M51 1228.75h9M20 1230.75h2M23 1230.75h1M25 1230.75h1M27 1230.75h2M30 1230.75h1M32 1230.75h4M37 1230.75h8M20 1232.75h2M23 1232.75h1M25 1232.75h1M27 1232.75h2M30 1232.75h1M32 1232.75h4M37 1232.75h6M20 1234.75h2M23 1234.75h1M25 1234.75h1M27 1234.75h2M30 1234.75h1M32 1234.75h4M37 1234.75h8M20 1236.75h2M23 1236.75h1M25 1236.75h18M45 1236.75h5M51 1236.75h10M20 1238.75h2M23 1238.75h1M25 1238.75h3M20 1240.75h2M23 1240.75h1M25 1240.75h1M16 1242.75h8M20 1244.75h2M23 1244.75h1M25 1244.75h18M45 1244.75h5M51 1244.75h8M20 1246.75h2M23 1246.75h1M25 1246.75h1M27 1246.75h2M30 1246.75h1M32 1246.75h4M37 1246.75h7M20 1248.75h2M23 1248.75h1M25 1248.75h1M20 1250.75h2M23 1250.75h1M25 1250.75h1M27 1250.75h2M30 1250.75h1M32 1250.75h4M37 1250.75h8M20 1252.75h6M27 1252.75h5M33 1252.75h12M46 1252.75h7M54 1252.75h8M63 1252.75h2M66 1252.75h1M68 1252.75h6M75 1252.75h5M81 1252.75h16M20 1254.75h2M23 1254.75h1M25 1254.75h1M27 1254.75h2M30 1254.75h1M32 1254.75h4M37 1254.75h6M16 1256.75h8M20 1258.75h2M23 1258.75h1M25 1258.75h1M27 1258.75h2M30 1258.75h1M32 1258.75h4M37 1258.75h7M20 1260.75h2M23 1260.75h1M25 1260.75h3"/><path stroke="#9cdcfe" opacity="0.62" d="M39 90.75h22M39 92.75h16M39 94.75h16M39 96.75h10M44 98.75h8M37 100.75h19M36 102.75h23M41 106.75h9M53 106.75h9M87 106.75h10M40 108.75h12M57 108.75h10M86 108.75h11M40 110.75h8M40 112.75h9M50 114.75h27M50 116.75h19M58 134.75h3M25 136.75h8M36 136.75h8M37 140.75h16M25 148.75h5M33 148.75h16M31 152.75h8M37 156.75h3M41 156.75h11M24 158.75h3M38 158.75h4M35 160.75h6M23 164.75h8M39 172.75h22M86 172.75h10M23 174.75h6M32 174.75h6M50 174.75h6M74 174.75h23M16 176.75h10M23 178.75h7M39 186.75h22M86 186.75h10M23 188.75h6M32 188.75h6M50 188.75h6M74 188.75h23M16 190.75h10M23 192.75h7M39 200.75h22M86 200.75h10M23 202.75h6M32 202.75h6M50 202.75h6M74 202.75h23M16 204.75h10M23 206.75h7M85 220.75h12M33 336.75h7M16 338.75h5M22 338.75h5M35 338.75h6M16 346.75h3M20 346.75h4M25 346.75h10M41 346.75h3M26 348.75h12M39 348.75h4M84 348.75h10M26 352.75h8M54 352.75h2M23 354.75h15M45 362.75h1M26 364.75h6M24 366.75h6M23 370.75h5M16 382.75h5M22 382.75h3M19 386.75h11M31 386.75h9M41 386.75h6M48 386.75h7M92 386.75h5M51 388.75h5M16 390.75h5M41 392.75h10M52 392.75h11M64 392.75h6M71 392.75h7M42 394.75h11M31 396.75h3M22 398.75h13M36 398.75h8M23 400.75h7M20 408.75h8M20 410.75h10M31 410.75h9M26 412.75h6M38 416.75h6M51 418.75h4M56 418.75h6M68 418.75h7M23 422.75h15M53 428.75h7M16 430.75h6M39 432.75h12M56 432.75h14M71 432.75h4M76 432.75h7M84 432.75h2M51 434.75h5M16 436.75h3M43 436.75h10M54 436.75h10M34 438.75h6M41 438.75h8M23 440.75h17M48 446.75h8M50 448.75h12M82 448.75h5M24 450.75h9M45 450.75h11M64 450.75h3M68 450.75h7M82 450.75h12M95 450.75h2M16 458.75h11M23 460.75h14M32 468.75h11M44 468.75h13M23 474.75h8M27 482.75h9M20 484.75h11M22 490.75h13M36 490.75h14M25 492.75h4M45 494.75h3M77 494.75h14M22 496.75h9M32 496.75h6M96 496.75h1M23 498.75h14M20 506.75h18M28 514.75h5M16 520.75h4M33 522.75h6M40 522.75h4M74 522.75h12M28 526.75h6M42 528.75h7M50 528.75h5M77 528.75h10M23 530.75h11M51 536.75h2M28 538.75h3M32 538.75h5M38 538.75h12M31 540.75h4M39 542.75h13M71 542.75h6M88 542.75h3M16 544.75h8M25 544.75h10M75 544.75h9M23 546.75h7M41 554.75h5M20 556.75h15M20 558.75h3M38 562.75h14M53 562.75h4M58 562.75h8M25 564.75h5M31 564.75h3M35 564.75h7M81 564.75h9M95 564.75h2M38 566.75h4M43 566.75h7M51 566.75h14M16 568.75h4M21 568.75h6M23 570.75h8M20 580.75h9M21 586.75h12M34 586.75h6M66 586.75h5M89 586.75h8M46 588.75h7M54 588.75h10M65 588.75h5M71 588.75h6M16 590.75h3M46 590.75h6M53 590.75h3M70 590.75h12M25 592.75h9M22 594.75h8M31 594.75h3M35 594.75h7M43 594.75h12M76 594.75h7M84 594.75h6M22 596.75h11M34 596.75h10M16 604.75h9M26 604.75h8M23 606.75h17M19 614.75h11M22 616.75h7M30 616.75h11M42 616.75h4M20 620.75h13M22 622.75h6M20 624.75h14M39 624.75h13M52 626.75h5M23 628.75h5M31 636.75h3M35 636.75h13M20 638.75h18M20 640.75h5M23 644.75h7M31 644.75h3M16 646.75h7M41 646.75h10M60 646.75h10M36 648.75h9M46 648.75h7M54 648.75h11M35 650.75h9M23 656.75h13M20 664.75h15M30 666.75h3M34 666.75h10M40 672.75h12M73 672.75h5M79 672.75h3M83 672.75h14M25 674.75h3M89 674.75h8M23 676.75h10M20 684.75h8M27 686.75h12M42 690.75h11M74 690.75h10M16 692.75h7M24 692.75h10M23 694.75h5M52 700.75h5M50 702.75h6M57 702.75h7M20 704.75h17M72 710.75h14M91 710.75h6M23 712.75h5M29 712.75h1M23 714.75h5M54 722.75h2M16 724.75h14M31 724.75h3M64 724.75h3M81 724.75h8M20 726.75h6M27 726.75h3M31 726.75h13M59 726.75h10M70 726.75h5M76 726.75h13M20 728.75h7M28 730.75h7M32 734.75h6M39 736.75h6M46 736.75h5M32 744.75h6M39 746.75h6M46 746.75h5M32 754.75h6M39 756.75h6M46 756.75h5M32 764.75h6M39 766.75h6M46 766.75h3M32 774.75h6M39 776.75h6M46 776.75h5M32 784.75h6M39 786.75h6M46 786.75h5M32 794.75h6M39 796.75h6M46 796.75h7M32 804.75h6M39 806.75h6M46 806.75h7M32 814.75h6M39 816.75h6M46 816.75h6M32 824.75h6M39 826.75h6M46 826.75h5M32 834.75h6M39 836.75h6M46 836.75h7M32 844.75h6M39 846.75h6M46 846.75h3M32 854.75h6M39 856.75h6M46 856.75h6M32 864.75h6M39 866.75h6M46 866.75h3M32 874.75h6M39 876.75h6M46 876.75h6M32 884.75h6M39 886.75h6M46 886.75h7M32 894.75h6M39 896.75h6M46 896.75h3M32 904.75h6M39 906.75h6M46 906.75h5M32 914.75h6M39 916.75h6M46 916.75h6M23 926.75h6M30 926.75h7M33 934.75h3M23 938.75h13M54 944.75h4M20 946.75h7M16 952.75h8M19 954.75h8M46 954.75h10M23 956.75h10M52 962.75h8M20 964.75h18M22 972.75h10M33 972.75h11M23 974.75h16M85 988.75h12"/><path stroke="#c586c0" opacity="0.62" d="M55 98.75h3M85 104.75h3M80 114.75h3M72 116.75h3M16 128.75h6M16 138.75h3M20 142.75h2M20 150.75h2M24 152.75h6M20 158.75h3M18 160.75h5M16 164.75h6M16 178.75h6M16 192.75h6M16 206.75h6M16 328.75h5M22 328.75h3M16 336.75h6M16 350.75h5M16 352.75h2M16 354.75h6M16 370.75h6M16 386.75h2M16 400.75h6M16 408.75h2M16 422.75h6M16 440.75h6M16 450.75h3M16 460.75h6M16 474.75h6M16 484.75h2M16 490.75h5M16 492.75h3M16 494.75h5M16 496.75h5M16 498.75h6M16 506.75h2M16 530.75h6M16 538.75h6M16 542.75h2M16 546.75h6M16 556.75h2M16 562.75h6M16 566.75h6M16 570.75h6M16 580.75h2M20 582.75h2M16 594.75h5M16 606.75h6M16 614.75h2M16 616.75h5M16 620.75h3M16 624.75h3M16 628.75h6M16 638.75h2M16 644.75h6M16 648.75h5M16 656.75h6M16 664.75h2M20 668.75h2M16 676.75h6M16 684.75h2M20 686.75h6M16 694.75h6M16 704.75h2M16 714.75h6M16 726.75h3M16 728.75h2M20 730.75h6M24 732.75h4M28 734.75h2M32 736.75h6M28 740.75h5M24 742.75h4M28 744.75h2M32 746.75h6M28 750.75h5M24 752.75h4M28 754.75h2M32 756.75h6M28 760.75h5M24 762.75h4M28 764.75h2M32 766.75h6M28 770.75h5M24 772.75h4M28 774.75h2M32 776.75h6M28 780.75h5M24 782.75h4M28 784.75h2M32 786.75h6M28 790.75h5M24 792.75h4M28 794.75h2M32 796.75h6M28 800.75h5M24 802.75h4M28 804.75h2M32 806.75h6M28 810.75h5M24 812.75h4M28 814.75h2M32 816.75h6M28 820.75h5M24 822.75h4M28 824.75h2M32 826.75h6M28 830.75h5M24 832.75h4M28 834.75h2M32 836.75h6M28 840.75h5M24 842.75h4M28 844.75h2M32 846.75h6M28 850.75h5M24 852.75h4M28 854.75h2M32 856.75h6M28 860.75h5M24 862.75h4M28 864.75h2M32 866.75h6M28 870.75h5M24 872.75h4M28 874.75h2M32 876.75h6M28 880.75h5M24 882.75h4M28 884.75h2M32 886.75h6M28 890.75h5M24 892.75h4M28 894.75h2M32 896.75h6M28 900.75h5M24 902.75h4M28 904.75h2M32 906.75h6M28 910.75h5M24 912.75h4M28 914.75h2M32 916.75h6M28 920.75h5M16 926.75h6M16 938.75h6M16 946.75h2M16 954.75h2M16 956.75h6M16 964.75h2M16 972.75h5M16 974.75h6"/><path stroke="#dcdcaa" opacity="0.62" d="M59 98.75h11M63 106.75h8M68 108.75h8M84 114.75h13M76 116.75h16M20 120.75h11M33 126.75h9M35 134.75h15M45 136.75h11M50 148.75h5M28 158.75h9M34 170.75h14M39 174.75h10M57 174.75h10M27 176.75h38M34 184.75h9M39 188.75h10M57 188.75h10M27 190.75h38M34 198.75h8M39 202.75h10M57 202.75h10M27 204.75h38M42 220.75h20M26 328.75h28M34 334.75h13M51 336.75h5M30 344.75h11M42 344.75h2M36 346.75h4M63 348.75h7M71 348.75h12M30 360.75h11M33 362.75h11M33 364.75h1M16 366.75h7M32 368.75h6M32 376.75h20M34 378.75h12M31 380.75h6M38 380.75h5M44 380.75h13M63 380.75h14M78 380.75h8M26 382.75h4M16 384.75h12M29 384.75h5M80 386.75h11M22 390.75h5M54 394.75h14M33 406.75h9M33 412.75h13M24 416.75h8M21 418.75h9M63 418.75h4M76 418.75h5M88 418.75h9M31 428.75h14M29 432.75h9M33 434.75h6M79 436.75h7M31 446.75h9M36 448.75h13M63 448.75h14M96 448.75h1M76 450.75h5M41 454.75h5M32 466.75h11M21 472.75h9M31 480.75h12M20 486.75h14M51 490.75h13M73 490.75h7M81 490.75h10M27 494.75h6M34 494.75h10M49 494.75h3M53 494.75h13M62 496.75h4M30 504.75h11M20 508.75h13M24 510.75h9M16 514.75h7M16 522.75h10M54 522.75h4M59 522.75h6M91 522.75h6M31 536.75h12M36 540.75h4M23 542.75h7M92 542.75h5M36 544.75h14M51 544.75h14M33 552.75h10M28 558.75h5M73 562.75h13M16 564.75h8M43 564.75h8M57 564.75h6M23 566.75h6M30 566.75h3M34 566.75h3M33 576.75h17M38 578.75h6M16 586.75h4M41 586.75h9M51 586.75h14M72 586.75h5M30 588.75h7M86 588.75h6M20 590.75h3M31 590.75h10M42 590.75h3M83 590.75h3M25 598.75h13M32 612.75h14M31 614.75h13M47 616.75h3M21 618.75h10M34 620.75h10M67 624.75h4M72 624.75h12M32 634.75h19M71 646.75h12M16 650.75h8M25 650.75h9M16 654.75h7M31 662.75h10M27 672.75h12M53 672.75h6M32 682.75h19M31 700.75h13M30 702.75h11M20 706.75h14M30 722.75h16M39 734.75h6M39 744.75h6M39 754.75h6M39 764.75h6M39 774.75h6M39 784.75h6M39 794.75h6M39 804.75h6M39 814.75h6M39 824.75h6M39 834.75h6M39 844.75h6M39 854.75h6M39 864.75h6M39 874.75h6M39 884.75h6M39 894.75h6M39 904.75h6M39 914.75h6M32 932.75h11M16 934.75h5M26 934.75h6M37 934.75h8M46 934.75h4M16 936.75h12M29 936.75h5M31 944.75h15M25 952.75h5M34 962.75h10M16 970.75h14M31 970.75h5M42 988.75h20"/><path stroke="#b5cea8" opacity="0.62" d="M59 100.75h2M62 102.75h4M42 338.75h2M16 344.75h13M16 380.75h14M58 380.75h4M24 396.75h6M23 430.75h7M65 436.75h13M28 458.75h11M52 458.75h3M16 482.75h10M48 482.75h7M21 520.75h11M66 522.75h7M16 540.75h14M85 544.75h3M64 564.75h8M73 564.75h7M39 568.75h10M50 568.75h6M24 590.75h6M57 590.75h12M33 646.75h7M24 654.75h13M16 690.75h14M54 690.75h9M16 702.75h13M68 724.75h12M29 732.75h3M29 742.75h3M29 752.75h3M29 762.75h3M29 772.75h3M29 782.75h3M29 792.75h3M29 802.75h3M29 812.75h3M29 822.75h3M29 832.75h3M29 842.75h3M29 852.75h3M29 862.75h3M29 872.75h3M29 882.75h3M29 892.75h3M29 902.75h3M29 912.75h3"/><path stroke="#179fff" opacity="0.62" d="M72 106.75h1M85 106.75h1M76 108.75h1M56 136.75h1M57 136.75h1M20 138.75h1M16 160.75h1M24 160.75h1M41 160.75h1M43 160.75h1M16 162.75h1M19 408.75h1M40 408.75h1M42 408.75h1M16 414.75h1M19 484.75h1M40 484.75h1M42 484.75h1M16 488.75h1M19 506.75h1M40 506.75h1M42 506.75h1M16 512.75h1M19 556.75h1M40 556.75h1M42 556.75h1M16 560.75h1M19 580.75h1M40 580.75h1M42 580.75h1M16 584.75h1M19 638.75h1M40 638.75h1M42 638.75h1M16 642.75h1M19 664.75h1M40 664.75h1M42 664.75h1M16 670.75h1M19 684.75h1M40 684.75h1M42 684.75h1M16 688.75h1M19 704.75h1M40 704.75h1M42 704.75h1M16 708.75h1M19 728.75h1M35 728.75h1M37 728.75h1M31 734.75h1M52 734.75h1M54 734.75h1M28 738.75h1M31 744.75h1M52 744.75h1M54 744.75h1M28 748.75h1M31 754.75h1M52 754.75h1M54 754.75h1M28 758.75h1M31 764.75h1M52 764.75h1M54 764.75h1M28 768.75h1M31 774.75h1M52 774.75h1M54 774.75h1M28 778.75h1M31 784.75h1M52 784.75h1M54 784.75h1M28 788.75h1M31 794.75h1M52 794.75h1M54 794.75h1M28 798.75h1M31 804.75h1M52 804.75h1M54 804.75h1M28 808.75h1M31 814.75h1M52 814.75h1M54 814.75h1M28 818.75h1M31 824.75h1M52 824.75h1M54 824.75h1M28 828.75h1M31 834.75h1M52 834.75h1M54 834.75h1M28 838.75h1M31 844.75h1M52 844.75h1M54 844.75h1M28 848.75h1M31 854.75h1M52 854.75h1M54 854.75h1M28 858.75h1M31 864.75h1M52 864.75h1M54 864.75h1M28 868.75h1M31 874.75h1M52 874.75h1M54 874.75h1M28 878.75h1M31 884.75h1M52 884.75h1M54 884.75h1M28 888.75h1M31 894.75h1M52 894.75h1M54 894.75h1M28 898.75h1M31 904.75h1M52 904.75h1M54 904.75h1M28 908.75h1M31 914.75h1M52 914.75h1M54 914.75h1M28 918.75h1M16 924.75h1M19 946.75h1M40 946.75h1M42 946.75h1M16 950.75h1M19 964.75h1M40 964.75h1M42 964.75h1M16 968.75h1"/></g><rect x="65" y="90" width="5" height="2" fill="#e8940f"/><rect x="59" y="92" width="5" height="2" fill="#e8940f"/><rect x="59" y="94" width="5" height="2" fill="#e8940f"/><rect x="53" y="96" width="5" height="2" fill="#e8940f"/></svg></div><div class="abs" style="left:815px;top:57px;width:6px;height:1262px;box-shadow:#000 -6px 0 6px -6px inset"></div><div class="abs" style="left:918px;top:57px;width:14px;height:1262px;border-left:1px solid #3a3a3a"></div><div class="abs" style="left:918px;top:72px;width:14px;height:66px;background:rgba(121,121,121,.2)"></div><div class="abs" style="left:918px;top:107px;width:14px;height:2px;background:#a0a0a0"></div><div class="abs" style="left:923px;top:109px;width:5px;height:4px;background:#9e6a1a"></div></div><div id="status"><svg class="abs" style="left:15px;top:4px" width="14" height="14" viewBox="0 0 16 16" fill="none" stroke="#fff" stroke-width="1.1"><circle cx="8" cy="8" r="6.500"/><path d="M5 5 L11 11 M11 5 L5 11"/></svg><span class="u" style="letter-spacing:0.188px;left:32px">0</span><svg class="abs" style="left:42px;top:4px" width="14" height="14" viewBox="0 0 16 16" fill="none" stroke="#fff" stroke-width="1.1"><path d="M8 1.800 L14.800 14 H1.200 Z" stroke-linejoin="round"/><path d="M8 6.500 V10.500 M8 11.500 V12.800"/></svg><span class="u" style="letter-spacing:0.188px;left:59px">0</span><span class="u" style="letter-spacing:0.046px;left:912px">Ln 51, Col 63 (5 selected)</span><span class="u" style="letter-spacing:-0.132px;left:1067px">Spaces: 4</span><span class="u" style="letter-spacing:-0.319px;left:1135px">UTF-8</span><span class="u" style="letter-spacing:-0.742px;left:1184px">LF</span><span class="u" style="letter-spacing:-0.629px;left:1212px">Java</span><svg class="abs" style="left:1250px;top:3px" width="16" height="16" viewBox="0 0 16 16" fill="none" stroke="#fff" stroke-width="1.1"><path d="M3.500 11.500 V7 a4.500 4.500 0 0 1 9 0 V11.500 L13.500 12.500 H2.500 Z" stroke-linejoin="round"/><path d="M6.500 12.800 a1.500 1.500 0 0 0 3 0"/></svg></div></div></body></html>
